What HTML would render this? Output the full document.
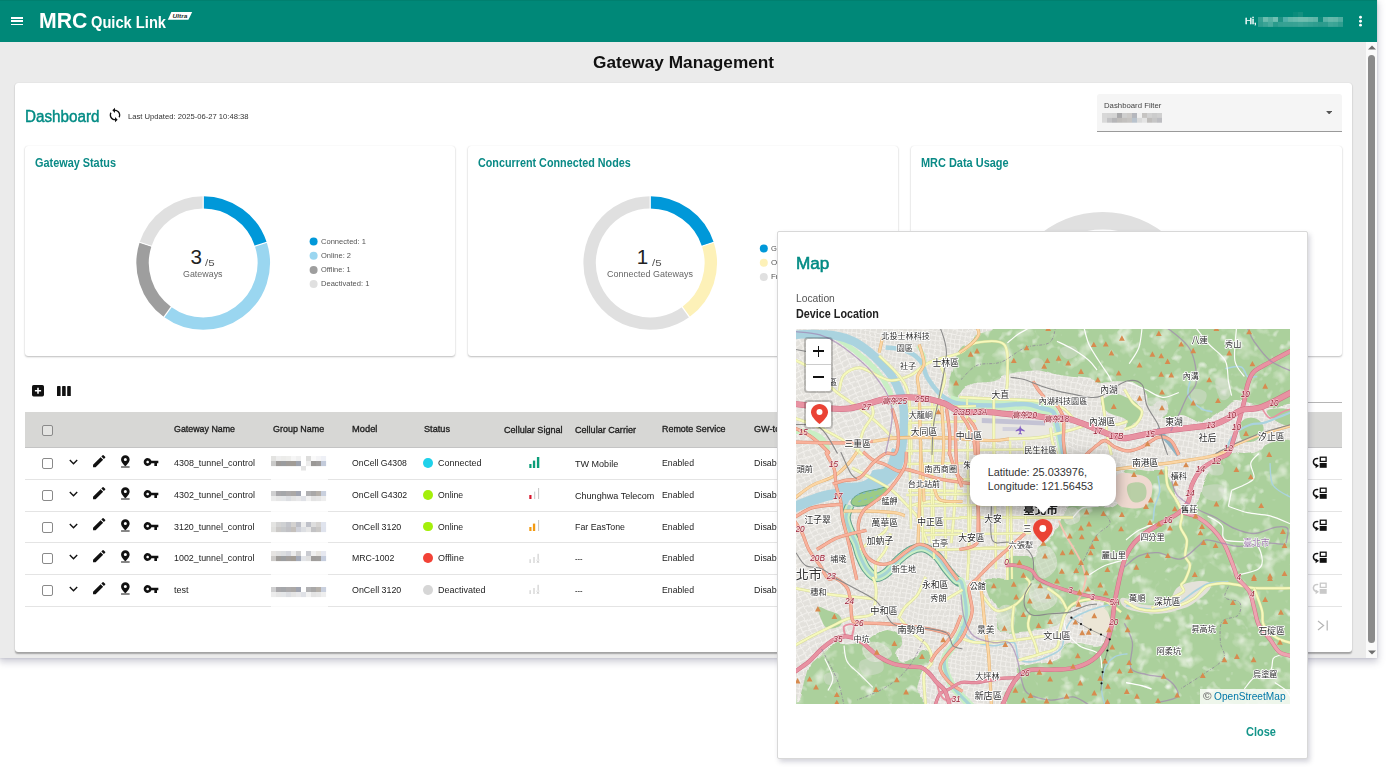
<!DOCTYPE html>
<html lang="en">
<head>
<meta charset="utf-8">
<title>Gateway Management</title>
<style>
*{box-sizing:border-box;margin:0;padding:0}
html,body{width:1400px;height:781px;overflow:hidden;background:#fff}
body{font-family:"Liberation Sans","Noto Sans CJK TC",sans-serif;color:#222;position:relative}
.abs{position:absolute}
.t{position:absolute;white-space:nowrap;line-height:1}
#win{position:absolute;left:0;top:0;width:1377px;height:658px;background:#ebebeb;box-shadow:0 3px 7px 1px rgba(90,90,120,.30),0 0 2px rgba(90,90,120,.25)}
#hdr{position:absolute;left:0;top:0;width:1377px;height:42px;background:#008878;border-top:1px solid #00806f}
#main{position:absolute;left:15px;top:83px;width:1337px;height:569px;background:#fff;border-radius:3px;box-shadow:0 1.5px 1.5px rgba(0,0,0,.30),0 0 1px rgba(0,0,0,.15)}
.card{position:absolute;top:146px;height:210px;background:#fff;border-radius:3px;box-shadow:0 1px 2px rgba(0,0,0,.26),0 0 1px rgba(0,0,0,.10)}
.teal{color:#008b84}
.ct{font-size:12px;font-weight:bold;color:#0a8a86;top:156px}
.lg{font-size:8px;color:#666}
.th{font-size:9px;font-weight:bold;color:#222}
.td{font-size:9px;color:#222}
.rowline{position:absolute;left:25px;width:1317px;height:1px;background:#e4e4e4}
.cb{position:absolute;left:42px;width:11px;height:11px;border:1px solid #8a8a8a;border-radius:2px;background:#fff}
.dot{position:absolute;width:10px;height:10px;border-radius:50%;left:423px}
.blur{position:absolute;filter:blur(.7px)}
</style>
</head>
<body>
<div id="win">
<div id="hdr"></div>
<!-- hamburger -->
<div class="abs" style="left:11px;top:17px;width:12px;height:1.6px;background:#fff"></div>
<div class="abs" style="left:11px;top:20.4px;width:12px;height:1.6px;background:#fff"></div>
<div class="abs" style="left:11px;top:23.8px;width:12px;height:1.6px;background:#fff"></div>
<!-- logo -->
<div class="t" id="lg1" style="left:39.4px;top:10px;font-size:21.8px;color:#fff;font-weight:bold;transform:scaleX(0.9749);transform-origin:0 0;">MRC</div>
<div class="t" id="lg2" style="left:91px;top:15px;font-size:16px;color:#fff;font-weight:bold;transform:scaleX(0.9169);transform-origin:0 0;">Quick Link</div>
<svg class="abs" style="left:166px;top:10px" width="28" height="11" viewBox="0 0 28 11"><path d="M5.4 2 L26.2 2 L22.4 9.8 L1.8 9.8 Z" fill="#fff"/><text x="6.4" y="7.9" font-family="Liberation Sans, sans-serif" font-size="5.8" font-weight="bold" font-style="italic" fill="#1d2f2c" textLength="15" lengthAdjust="spacingAndGlyphs">Ultra</text></svg>
<div class="t" id="hi" style="left:1245px;top:16px;font-size:9.9px;color:#fff;transform:scaleX(0.9756);transform-origin:0 0;-webkit-text-stroke:.35px #fff;">Hi,</div>
<!-- user -->
<svg class="abs" style="left:1258px;top:16.8px" width="85" height="10" viewBox="0 0 85 10"><rect x="0" y="0" width="5.1" height="5" fill="#35a092"/><rect x="0" y="4.9" width="5.1" height="5" fill="#2f9d8f"/><rect x="5" y="0" width="5.1" height="5" fill="#6bbcae"/><rect x="5" y="4.9" width="5.1" height="5" fill="#3ba496"/><rect x="10" y="0" width="5.1" height="5" fill="#55b1a3"/><rect x="10" y="4.9" width="5.1" height="5" fill="#4aab9e"/><rect x="15" y="0" width="5.1" height="5" fill="#6fbfb2"/><rect x="15" y="4.9" width="5.1" height="5" fill="#2a9b8c"/><rect x="20" y="0" width="5.1" height="5" fill="#1f9385"/><rect x="20" y="4.9" width="5.1" height="5" fill="#33a092"/><rect x="25" y="0" width="5.1" height="5" fill="#4fafa8"/><rect x="25" y="4.9" width="5.1" height="5" fill="#36a193"/><rect x="30" y="0" width="5.1" height="5" fill="#62b8aa"/><rect x="30" y="4.9" width="5.1" height="5" fill="#36a193"/><rect x="35" y="0" width="5.1" height="5" fill="#68bbae"/><rect x="35" y="4.9" width="5.1" height="5" fill="#38a294"/><rect x="40" y="0" width="5.1" height="5" fill="#70beb0"/><rect x="40" y="4.9" width="5.1" height="5" fill="#3da597"/><rect x="45" y="0" width="5.1" height="5" fill="#6fbdaf"/><rect x="45" y="4.9" width="5.1" height="5" fill="#38a294"/><rect x="50" y="0" width="5.1" height="5" fill="#66b9ab"/><rect x="50" y="4.9" width="5.1" height="5" fill="#33a092"/><rect x="55" y="0" width="5.1" height="5" fill="#5fb6a8"/><rect x="55" y="4.9" width="5.1" height="5" fill="#2f9d8f"/><rect x="60" y="0" width="5.1" height="5" fill="#0f8c7d"/><rect x="60" y="4.9" width="5.1" height="5" fill="#2b9b8c"/><rect x="65" y="0" width="5.1" height="5" fill="#5ab3a6"/><rect x="65" y="4.9" width="5.1" height="5" fill="#2d9c8e"/><rect x="70" y="0" width="5.1" height="5" fill="#66b9ab"/><rect x="70" y="4.9" width="5.1" height="5" fill="#3fa698"/><rect x="75" y="0" width="5.1" height="5" fill="#62b7a9"/><rect x="75" y="4.9" width="5.1" height="5" fill="#3ba496"/><rect x="80" y="0" width="5.1" height="5" fill="#4fada0"/><rect x="80" y="4.9" width="5.1" height="5" fill="#2f9d8f"/></svg>
<svg class="abs" style="left:1293px;top:12px" width="10" height="5" viewBox="0 0 10 5"><rect width="5" height="5" fill="#0a8c7c"/><rect x="5" width="5" height="5" fill="#159080"/></svg>
<svg class="abs" style="left:1358px;top:15px" width="5" height="13" viewBox="0 0 5 13"><circle cx="2.5" cy="2.3" r="1.45" fill="#fff"/><circle cx="2.5" cy="6.2" r="1.45" fill="#fff"/><circle cx="2.5" cy="10.15" r="1.45" fill="#fff"/></svg>

<div class="t" id="title" style="left:592.6px;top:54px;font-size:17.4px;color:#111;font-weight:bold;transform:scaleX(0.9915);transform-origin:0 0;">Gateway Management</div>
<div id="main"></div>
<div class="t" id="dash" style="left:24.9px;top:109px;font-size:16.9px;color:#008b84;transform:scaleX(0.9023);transform-origin:0 0;-webkit-text-stroke:.45px #008b84;">Dashboard</div>
<svg class="abs" style="left:107px;top:107px" width="16" height="16" viewBox="0 0 24 24"><path fill="#111" d="M12 4V1L8 5l4 4V6c3.31 0 6 2.69 6 6 0 1.01-.25 1.97-.7 2.8l1.46 1.46C19.54 15.03 20 13.57 20 12c0-4.42-3.58-8-8-8zm0 14c-3.31 0-6-2.69-6-6 0-1.01.25-1.97.7-2.8L5.24 7.74C4.46 8.97 4 10.43 4 12c0 4.42 3.58 8 8 8v3l4-4-4-4v3z"/></svg>
<div class="t" id="upd" style="left:127.6px;top:113px;font-size:8px;color:#333;transform:scaleX(0.9547);transform-origin:0 0;">Last Updated: 2025-06-27 10:48:38</div>
<div class="abs" style="left:1097px;top:93.5px;width:245px;height:38px;background:#f5f5f5;border-radius:3px 3px 0 0;border-bottom:1px solid #9a9a9a"></div>
<div class="t" id="flt" style="left:1104px;top:102px;font-size:8px;color:#444;transform:scaleX(0.9706);transform-origin:0 0;">Dashboard Filter</div>
<svg class="abs" style="left:1102px;top:113px" width="60" height="10" viewBox="0 0 60 10"><rect x="0" y="0" width="5.1" height="5" fill="#d8d8d8"/><rect x="0" y="4.9" width="5.1" height="4.8" fill="#d9d9d9"/><rect x="5" y="0" width="5.1" height="5" fill="#d6d6d6"/><rect x="5" y="4.9" width="5.1" height="4.8" fill="#c3c3c5"/><rect x="10" y="0" width="5.1" height="5" fill="#d4d4d4"/><rect x="10" y="4.9" width="5.1" height="4.8" fill="#b6b6b8"/><rect x="15" y="0" width="5.1" height="5" fill="#a9a9ab"/><rect x="15" y="4.9" width="5.1" height="4.8" fill="#bebcba"/><rect x="20" y="0" width="5.1" height="5" fill="#cfcfcf"/><rect x="20" y="4.9" width="5.1" height="4.8" fill="#c2c0be"/><rect x="25" y="0" width="5.1" height="5" fill="#cdcbc9"/><rect x="25" y="4.9" width="5.1" height="4.8" fill="#c6c4c2"/><rect x="30" y="0" width="5.1" height="5" fill="#b5b7bd"/><rect x="30" y="4.9" width="5.1" height="4.8" fill="#b9c3cd"/><rect x="35" y="0" width="5.1" height="5" fill="#f0f0f0"/><rect x="35" y="4.9" width="5.1" height="4.8" fill="#dadada"/><rect x="40" y="0" width="5.1" height="5" fill="#c6c4c2"/><rect x="40" y="4.9" width="5.1" height="4.8" fill="#e4e4e4"/><rect x="45" y="0" width="5.1" height="5" fill="#d2d2d2"/><rect x="45" y="4.9" width="5.1" height="4.8" fill="#bfbdbb"/><rect x="50" y="0" width="5.1" height="5" fill="#cccccc"/><rect x="50" y="4.9" width="5.1" height="4.8" fill="#c6c6c6"/><rect x="55" y="0" width="5.1" height="5" fill="#d0d0d0"/><rect x="55" y="4.9" width="5.1" height="4.8" fill="#bdbdc1"/></svg>
<svg class="abs" style="left:1325.8px;top:110.8px" width="6.4" height="3.5" viewBox="0 0 7 4"><path d="M0 0h7L3.5 4z" fill="#555"/></svg>
<div class="card" style="left:25px;width:430px"></div>
<div class="t" id="ct0" style="left:34.8px;top:157px;font-size:12.3px;color:#0a8a86;font-weight:bold;transform:scaleX(0.8843);transform-origin:0 0;">Gateway Status</div>
<div class="card" style="left:468px;width:430px"></div>
<div class="t" id="ct1" style="left:477.8px;top:157px;font-size:12.3px;color:#0a8a86;font-weight:bold;transform:scaleX(0.8768);transform-origin:0 0;">Concurrent Connected Nodes</div>
<div class="card" style="left:911px;width:431px"></div>
<div class="t" id="ct2" style="left:920.8px;top:157px;font-size:12.3px;color:#0a8a86;font-weight:bold;transform:scaleX(0.89);transform-origin:0 0;">MRC Data Usage</div>
<svg class="abs" style="left:0;top:0" width="1377" height="400" viewBox="0 0 1377 400"><path d="M203.2 202.4A60.6 60.6 0 0 1 260.83 244.27" fill="none" stroke="#0098d9" stroke-width="12.4"/><path d="M260.83 244.27A60.6 60.6 0 0 1 167.58 312.03" fill="none" stroke="#9ad6f0" stroke-width="12.4"/><path d="M167.58 312.03A60.6 60.6 0 0 1 145.57 244.27" fill="none" stroke="#9e9e9e" stroke-width="12.4"/><path d="M145.57 244.27A60.6 60.6 0 0 1 203.2 202.4" fill="none" stroke="#e0e0e0" stroke-width="12.4"/><line x1="203.2" y1="209.6" x2="203.2" y2="195.2" stroke="#fff" stroke-width="1.2"/><line x1="253.99" y1="246.5" x2="267.68" y2="242.05" stroke="#fff" stroke-width="1.2"/><line x1="171.81" y1="306.2" x2="163.35" y2="317.85" stroke="#fff" stroke-width="1.2"/><line x1="152.41" y1="246.5" x2="138.72" y2="242.05" stroke="#fff" stroke-width="1.2"/><path d="M650.2 202.4A60.6 60.6 0 0 1 707.83 244.27" fill="none" stroke="#0098d9" stroke-width="12.4"/><path d="M707.83 244.27A60.6 60.6 0 0 1 685.82 312.03" fill="none" stroke="#fdf1b8" stroke-width="12.4"/><path d="M685.82 312.03A60.6 60.6 0 1 1 650.2 202.4" fill="none" stroke="#e0e0e0" stroke-width="12.4"/><line x1="650.2" y1="209.6" x2="650.2" y2="195.2" stroke="#fff" stroke-width="1.2"/><line x1="700.99" y1="246.5" x2="714.68" y2="242.05" stroke="#fff" stroke-width="1.2"/><line x1="681.59" y1="306.2" x2="690.05" y2="317.85" stroke="#fff" stroke-width="1.2"/><circle cx="1102.7" cy="312" r="91.3" fill="none" stroke="#e0e0e0" stroke-width="17.4"/><circle cx="313.6" cy="241.6" r="4" fill="#0098d9"/><circle cx="313.6" cy="255.75" r="4" fill="#9ad6f0"/><circle cx="313.6" cy="269.9" r="4" fill="#9e9e9e"/><circle cx="313.6" cy="284.05" r="4" fill="#e0e0e0"/><circle cx="763.8" cy="248.6" r="4" fill="#0098d9"/><circle cx="763.8" cy="262.75" r="4" fill="#fdf1b8"/><circle cx="763.8" cy="276.9" r="4" fill="#e0e0e0"/></svg>
<div class="t" id="lgA0" style="left:321.2px;top:238px;font-size:7.9px;color:#555;transform:scaleX(0.9575);transform-origin:0 0;">Connected: 1</div>
<div class="t" id="lgA1" style="left:321.2px;top:252px;font-size:7.9px;color:#555;transform:scaleX(0.9488);transform-origin:0 0;">Online: 2</div>
<div class="t" id="lgA2" style="left:321.2px;top:266px;font-size:7.9px;color:#555;transform:scaleX(0.9405);transform-origin:0 0;">Offline: 1</div>
<div class="t" id="lgA3" style="left:321.2px;top:280px;font-size:7.9px;color:#555;transform:scaleX(0.9584);transform-origin:0 0;">Deactivated: 1</div>
<div class="t" style="left:771.3px;top:245px;font-size:7.9px;color:#555;transform:scaleX(0.9565);transform-origin:0 0;">Gateways: 1</div>
<div class="t" style="left:771.3px;top:259px;font-size:7.9px;color:#555;transform:scaleX(1.0157);transform-origin:0 0;">Others: 1</div>
<div class="t" style="left:771.3px;top:273px;font-size:7.9px;color:#555;transform:scaleX(0.9989);transform-origin:0 0;">Free: 3</div>
<div class="t" id="n3" style="left:190.4px;top:247px;font-size:20.6px;color:#222;">3</div>
<div class="t" style="left:205.4px;top:258px;font-size:9.6px;color:#555;transform:scaleX(1.1991);transform-origin:0 0;">/5</div>
<div class="t" id="gw" style="left:183px;top:270px;font-size:9.2px;color:#666;transform:scaleX(0.9681);transform-origin:0 0;">Gateways</div>
<div class="t" id="n1" style="left:636.8px;top:247px;font-size:20.6px;color:#222;">1</div>
<div class="t" style="left:652.4px;top:258px;font-size:9.6px;color:#555;transform:scaleX(1.1991);transform-origin:0 0;">/5</div>
<div class="t" id="cgw" style="left:607px;top:270px;font-size:9.2px;color:#666;transform:scaleX(0.9777);transform-origin:0 0;">Connected Gateways</div>
<svg class="abs" style="left:31.5px;top:385.3px" width="12" height="11.4" viewBox="0 0 12 11.4"><rect width="12" height="11.4" rx="1.6" fill="#111"/><path d="M5.2 2.7h1.6v2.2h2.3v1.6H6.8v2.2H5.2V6.5H2.9V4.9h2.3z" fill="#fff"/></svg>
<svg class="abs" style="left:56.5px;top:385.8px" width="14" height="10.6" viewBox="0 0 14 10.6"><rect x="0" width="3.6" height="10.6" rx=".8" fill="#111"/><rect x="5.1" width="3.6" height="10.6" rx=".8" fill="#111"/><rect x="10.2" width="3.6" height="10.6" rx=".8" fill="#111"/></svg>
<div class="abs" style="left:1100px;top:401.8px;width:242px;height:1px;background:#b5b5b5"></div>
<div class="abs" style="left:25px;top:412px;width:1317px;height:35.5px;background:#d7d7d5;border-bottom:1px solid #c4c4c4"></div>
<div class="cb" style="top:424.5px;background:#e4e4e2"></div>
<div class="t" id="th0" style="left:174.4px;top:425px;font-size:9.3px;color:#1d1d1d;transform:scaleX(0.9518);transform-origin:0 0;-webkit-text-stroke:.32px #1d1d1d;">Gateway Name</div>
<div class="t" id="th1" style="left:272.6px;top:425px;font-size:9.3px;color:#1d1d1d;transform:scaleX(0.9617);transform-origin:0 0;-webkit-text-stroke:.32px #1d1d1d;">Group Name</div>
<div class="t" id="th2" style="left:351.8px;top:425px;font-size:9.3px;color:#1d1d1d;transform:scaleX(1.0028);transform-origin:0 0;-webkit-text-stroke:.32px #1d1d1d;">Model</div>
<div class="t" id="th3" style="left:423.6px;top:425px;font-size:9.3px;color:#1d1d1d;transform:scaleX(0.9861);transform-origin:0 0;-webkit-text-stroke:.32px #1d1d1d;">Status</div>
<div class="t" id="th4" style="left:503.9px;top:426px;font-size:9.3px;color:#1d1d1d;transform:scaleX(0.9772);transform-origin:0 0;-webkit-text-stroke:.32px #1d1d1d;">Cellular Signal</div>
<div class="t" id="th5" style="left:575.4px;top:426px;font-size:9.3px;color:#1d1d1d;transform:scaleX(0.9755);transform-origin:0 0;-webkit-text-stroke:.32px #1d1d1d;">Cellular Carrier</div>
<div class="t" id="th6" style="left:661.8px;top:425px;font-size:9.3px;color:#1d1d1d;transform:scaleX(0.9613);transform-origin:0 0;-webkit-text-stroke:.32px #1d1d1d;">Remote Service</div>
<div class="t" id="th7" style="left:754px;top:425px;font-size:9.3px;color:#1d1d1d;transform:scaleX(0.9824);transform-origin:0 0;-webkit-text-stroke:.32px #1d1d1d;">GW-to-GW</div>
<div class="rowline" style="top:479.1px"></div>
<div class="cb" style="top:458.2px"></div>
<svg class="abs" style="left:69px;top:459.3px" width="9" height="6" viewBox="0 0 9 6"><path d="M.8 1.1L4.5 4.7 8.2 1.1" fill="none" stroke="#111" stroke-width="1.4"/></svg>
<svg class="abs" style="left:91.4px;top:453px" width="16.4" height="16.4" viewBox="0 0 24 24"><path fill="#111" d="M3 17.25V21h3.75L17.81 9.94l-3.75-3.75L3 17.25zM20.71 7.04a.996.996 0 0 0 0-1.41l-2.34-2.34a.996.996 0 0 0-1.41 0l-1.83 1.83 3.75 3.75 1.83-1.83z"/></svg>
<svg class="abs" style="left:118.1px;top:454.3px" width="14.7" height="14.7" viewBox="0 0 24 24"><path fill="#111" d="M12 2C8.14 2 5 5.14 5 9c0 5.25 7 11 7 11s7-5.75 7-11c0-3.86-3.14-7-7-7zm0 9.5a2.5 2.5 0 0 1 0-5 2.5 2.5 0 0 1 0 5zM5 20.3h14v1.9H5z"/></svg>
<svg class="abs" style="left:143.4px;top:454.4px" width="16" height="16" viewBox="0 0 24 24"><path fill="#111" d="M12.65 10A5.99 5.99 0 0 0 7 6c-3.31 0-6 2.69-6 6s2.69 6 6 6a5.99 5.99 0 0 0 5.65-4H17v4h4v-4h2v-4H12.65zM7 14c-1.1 0-2-.9-2-2s.9-2 2-2 2 .9 2 2-.9 2-2 2z"/></svg>
<div class="t" style="left:174.3px;top:459px;font-size:9.3px;color:#222;transform:scaleX(0.9598);transform-origin:0 0;">4308_tunnel_control</div>
<svg class="abs" style="left:271.3px;top:449.8px;overflow:visible" width="57" height="24" viewBox="0 0 57 24"><rect y="-1.3" width="57" height="32.15" fill="#fff" opacity=".8"/><rect x="0" y="6" width="5.1" height="5.1" fill="#e3e3e1"/><rect x="0" y="11" width="5.1" height="5.1" fill="#c9c9c8"/><rect x="5" y="6" width="5.1" height="5.1" fill="#eeeeee"/><rect x="5" y="11" width="5.1" height="5.1" fill="#9d9a98"/><rect x="10" y="6" width="5.1" height="5.1" fill="#ececea"/><rect x="10" y="11" width="5.1" height="5.1" fill="#9a9c9e"/><rect x="15" y="6" width="5.1" height="5.1" fill="#eeeeec"/><rect x="15" y="11" width="5.1" height="5.1" fill="#a09c98"/><rect x="20" y="6" width="5.1" height="5.1" fill="#f6f6f6"/><rect x="20" y="11" width="5.1" height="5.1" fill="#a19c96"/><rect x="25" y="6" width="5.1" height="5.1" fill="#f0f0f0"/><rect x="25" y="11" width="5.1" height="5.1" fill="#9ea3ae"/><rect x="30" y="6" width="5.1" height="5.1" fill="#ffffff"/><rect x="30" y="11" width="5.1" height="5.1" fill="#ffffff"/><rect x="35" y="6" width="5.1" height="5.1" fill="#dddddc"/><rect x="35" y="11" width="5.1" height="5.1" fill="#ececec"/><rect x="40" y="6" width="5.1" height="5.1" fill="#fafafa"/><rect x="40" y="11" width="5.1" height="5.1" fill="#9a9896"/><rect x="45" y="6" width="5.1" height="5.1" fill="#f4f4f6"/><rect x="45" y="11" width="5.1" height="5.1" fill="#9f9d9c"/><rect x="50" y="6" width="5.1" height="5.1" fill="#eef0f6"/><rect x="50" y="11" width="5.1" height="5.1" fill="#c3cbdb"/><rect x="30" y="16" width="5" height="4.5" fill="#e4e4e4"/></svg>
<div class="t" style="left:351.6px;top:459px;font-size:9.3px;color:#222;transform:scaleX(0.9299);transform-origin:0 0;">OnCell G4308</div>
<div class="dot" style="left:423.1px;top:458.3px;width:9.8px;height:9.8px;background:#1fd1ea"></div>
<div class="t" style="left:438.4px;top:459px;font-size:9.3px;color:#222;transform:scaleX(0.9648);transform-origin:0 0;">Connected</div>
<svg class="abs" style="left:528.6px;top:456.7px" width="11" height="11" viewBox="0 0 11 11"><rect x="0.3" y="7" width="2.2" height="4" fill="#0a9d78"/><rect x="3.9" y="3.6" width="2.3" height="7.4" fill="#0a9d78"/><rect x="7.9" y="0" width="2.4" height="11" fill="#0a9d78"/></svg>
<div class="t" style="left:575.4px;top:460px;font-size:9.3px;color:#222;transform:scaleX(0.9721);transform-origin:0 0;">TW Mobile</div>
<div class="t" style="left:661.8px;top:459px;font-size:9.3px;color:#222;transform:scaleX(0.9376);transform-origin:0 0;">Enabled</div>
<div class="t" style="left:754px;top:459px;font-size:9.3px;color:#222;transform:scaleX(0.9561);transform-origin:0 0;">Disabled</div>
<svg class="abs" style="left:1311.5px;top:455.8px" width="15" height="13" viewBox="0 0 15 13"><path d="M6.2 2.6A3.6 3.6 0 1 0 5 9.6" fill="none" stroke="#111" stroke-width="1.5"/><path d="M3.6 7.6l3.4 2.2-3.4 2.4z" fill="#111"/><rect x="8.3" y="1.2" width="5.8" height="4.2" fill="none" stroke="#111" stroke-width="1.3"/><rect x="7.7" y="7" width="7" height="4.8" fill="#111"/></svg>
<div class="rowline" style="top:510.8px"></div>
<div class="cb" style="top:489.8px"></div>
<svg class="abs" style="left:69px;top:490.9px" width="9" height="6" viewBox="0 0 9 6"><path d="M.8 1.1L4.5 4.7 8.2 1.1" fill="none" stroke="#111" stroke-width="1.4"/></svg>
<svg class="abs" style="left:91.4px;top:484.6px" width="16.4" height="16.4" viewBox="0 0 24 24"><path fill="#111" d="M3 17.25V21h3.75L17.81 9.94l-3.75-3.75L3 17.25zM20.71 7.04a.996.996 0 0 0 0-1.41l-2.34-2.34a.996.996 0 0 0-1.41 0l-1.83 1.83 3.75 3.75 1.83-1.83z"/></svg>
<svg class="abs" style="left:118.1px;top:485.9px" width="14.7" height="14.7" viewBox="0 0 24 24"><path fill="#111" d="M12 2C8.14 2 5 5.14 5 9c0 5.25 7 11 7 11s7-5.75 7-11c0-3.86-3.14-7-7-7zm0 9.5a2.5 2.5 0 0 1 0-5 2.5 2.5 0 0 1 0 5zM5 20.3h14v1.9H5z"/></svg>
<svg class="abs" style="left:143.4px;top:486px" width="16" height="16" viewBox="0 0 24 24"><path fill="#111" d="M12.65 10A5.99 5.99 0 0 0 7 6c-3.31 0-6 2.69-6 6s2.69 6 6 6a5.99 5.99 0 0 0 5.65-4H17v4h4v-4h2v-4H12.65zM7 14c-1.1 0-2-.9-2-2s.9-2 2-2 2 .9 2 2-.9 2-2 2z"/></svg>
<div class="t" style="left:174.3px;top:491px;font-size:9.3px;color:#222;transform:scaleX(0.9598);transform-origin:0 0;">4302_tunnel_control</div>
<svg class="abs" style="left:271.3px;top:485.2px;overflow:visible" width="57" height="24" viewBox="0 0 57 24"><rect y="-5.1" width="57" height="32.15" fill="#fff" opacity=".8"/><rect x="0" y="6" width="5.1" height="5.1" fill="#cfcfd0"/><rect x="0" y="11" width="5.1" height="5.1" fill="#ececec"/><rect x="5" y="6" width="5.1" height="5.1" fill="#a9a8ab"/><rect x="5" y="11" width="5.1" height="5.1" fill="#e6e6e6"/><rect x="10" y="6" width="5.1" height="5.1" fill="#a5a7aa"/><rect x="10" y="11" width="5.1" height="5.1" fill="#e4e6e8"/><rect x="15" y="6" width="5.1" height="5.1" fill="#acaaab"/><rect x="15" y="11" width="5.1" height="5.1" fill="#dcdee2"/><rect x="20" y="6" width="5.1" height="5.1" fill="#aba8a6"/><rect x="20" y="11" width="5.1" height="5.1" fill="#e4e4e4"/><rect x="25" y="6" width="5.1" height="5.1" fill="#a0a4b0"/><rect x="25" y="11" width="5.1" height="5.1" fill="#e8e8ea"/><rect x="30" y="6" width="5.1" height="5.1" fill="#ffffff"/><rect x="30" y="11" width="5.1" height="5.1" fill="#dfe1e6"/><rect x="35" y="6" width="5.1" height="5.1" fill="#b1b1b3"/><rect x="35" y="11" width="5.1" height="5.1" fill="#f2f2f2"/><rect x="40" y="6" width="5.1" height="5.1" fill="#a9a8a8"/><rect x="40" y="11" width="5.1" height="5.1" fill="#e3e3e3"/><rect x="45" y="6" width="5.1" height="5.1" fill="#b5b0aa"/><rect x="45" y="11" width="5.1" height="5.1" fill="#e6e6e6"/><rect x="50" y="6" width="5.1" height="5.1" fill="#c9d0de"/><rect x="50" y="11" width="5.1" height="5.1" fill="#eeeeee"/></svg>
<div class="t" style="left:351.6px;top:491px;font-size:9.3px;color:#222;transform:scaleX(0.9366);transform-origin:0 0;">OnCell G4302</div>
<div class="dot" style="left:423.1px;top:489.9px;width:9.8px;height:9.8px;background:#a4ef0b"></div>
<div class="t" style="left:438.4px;top:491px;font-size:9.3px;color:#222;transform:scaleX(0.9374);transform-origin:0 0;">Online</div>
<svg class="abs" style="left:528.6px;top:488.3px" width="11" height="11" viewBox="0 0 11 11"><rect x="0.3" y="7" width="2.2" height="4" fill="#d9152c"/><rect x="5.2" y="3.6" width="1" height="7.4" fill="#c6c6c6"/><rect x="9.1" y="0" width="1" height="11" fill="#c6c6c6"/></svg>
<div class="t" style="left:575.4px;top:492px;font-size:9.3px;color:#222;transform:scaleX(0.9741);transform-origin:0 0;">Chunghwa Telecom</div>
<div class="t" style="left:661.8px;top:491px;font-size:9.3px;color:#222;transform:scaleX(0.9376);transform-origin:0 0;">Enabled</div>
<div class="t" style="left:754px;top:491px;font-size:9.3px;color:#222;transform:scaleX(0.9561);transform-origin:0 0;">Disabled</div>
<svg class="abs" style="left:1311.5px;top:487.4px" width="15" height="13" viewBox="0 0 15 13"><path d="M6.2 2.6A3.6 3.6 0 1 0 5 9.6" fill="none" stroke="#111" stroke-width="1.5"/><path d="M3.6 7.6l3.4 2.2-3.4 2.4z" fill="#111"/><rect x="8.3" y="1.2" width="5.8" height="4.2" fill="none" stroke="#111" stroke-width="1.3"/><rect x="7.7" y="7" width="7" height="4.8" fill="#111"/></svg>
<div class="rowline" style="top:542.4px"></div>
<div class="cb" style="top:521.5px"></div>
<svg class="abs" style="left:69px;top:522.6px" width="9" height="6" viewBox="0 0 9 6"><path d="M.8 1.1L4.5 4.7 8.2 1.1" fill="none" stroke="#111" stroke-width="1.4"/></svg>
<svg class="abs" style="left:91.4px;top:516.3px" width="16.4" height="16.4" viewBox="0 0 24 24"><path fill="#111" d="M3 17.25V21h3.75L17.81 9.94l-3.75-3.75L3 17.25zM20.71 7.04a.996.996 0 0 0 0-1.41l-2.34-2.34a.996.996 0 0 0-1.41 0l-1.83 1.83 3.75 3.75 1.83-1.83z"/></svg>
<svg class="abs" style="left:118.1px;top:517.6px" width="14.7" height="14.7" viewBox="0 0 24 24"><path fill="#111" d="M12 2C8.14 2 5 5.14 5 9c0 5.25 7 11 7 11s7-5.75 7-11c0-3.86-3.14-7-7-7zm0 9.5a2.5 2.5 0 0 1 0-5 2.5 2.5 0 0 1 0 5zM5 20.3h14v1.9H5z"/></svg>
<svg class="abs" style="left:143.4px;top:517.7px" width="16" height="16" viewBox="0 0 24 24"><path fill="#111" d="M12.65 10A5.99 5.99 0 0 0 7 6c-3.31 0-6 2.69-6 6s2.69 6 6 6a5.99 5.99 0 0 0 5.65-4H17v4h4v-4h2v-4H12.65zM7 14c-1.1 0-2-.9-2-2s.9-2 2-2 2 .9 2 2-.9 2-2 2z"/></svg>
<div class="t" style="left:174.3px;top:523px;font-size:9.3px;color:#222;transform:scaleX(0.9551);transform-origin:0 0;">3120_tunnel_control</div>
<svg class="abs" style="left:271.3px;top:515.5px;overflow:visible" width="57" height="24" viewBox="0 0 57 24"><rect y="-3.7" width="57" height="32.15" fill="#fff" opacity=".8"/><rect x="0" y="6" width="5.1" height="5.1" fill="#e4e4e2"/><rect x="0" y="11" width="5.1" height="5.1" fill="#e0e0de"/><rect x="5" y="6" width="5.1" height="5.1" fill="#d4d4d4"/><rect x="5" y="11" width="5.1" height="5.1" fill="#cbc9c7"/><rect x="10" y="6" width="5.1" height="5.1" fill="#cfd1d3"/><rect x="10" y="11" width="5.1" height="5.1" fill="#c6c8ca"/><rect x="15" y="6" width="5.1" height="5.1" fill="#c3c5cb"/><rect x="15" y="11" width="5.1" height="5.1" fill="#c1c1c5"/><rect x="20" y="6" width="5.1" height="5.1" fill="#d4d2d0"/><rect x="20" y="11" width="5.1" height="5.1" fill="#c4c0bc"/><rect x="25" y="6" width="5.1" height="5.1" fill="#bdbfc7"/><rect x="25" y="11" width="5.1" height="5.1" fill="#cfd1d9"/><rect x="30" y="6" width="5.1" height="5.1" fill="#ededed"/><rect x="30" y="11" width="5.1" height="5.1" fill="#dcdee2"/><rect x="35" y="6" width="5.1" height="5.1" fill="#bfc1c9"/><rect x="35" y="11" width="5.1" height="5.1" fill="#e6e6e6"/><rect x="40" y="6" width="5.1" height="5.1" fill="#dedede"/><rect x="40" y="11" width="5.1" height="5.1" fill="#c2c2c4"/><rect x="45" y="6" width="5.1" height="5.1" fill="#d6d4d2"/><rect x="45" y="11" width="5.1" height="5.1" fill="#cac8c6"/><rect x="50" y="6" width="5.1" height="5.1" fill="#e0e4ee"/><rect x="50" y="11" width="5.1" height="5.1" fill="#dfe3ed"/></svg>
<div class="t" style="left:351.6px;top:523px;font-size:9.3px;color:#222;transform:scaleX(0.9536);transform-origin:0 0;">OnCell 3120</div>
<div class="dot" style="left:423.1px;top:521.6px;width:9.8px;height:9.8px;background:#a4ef0b"></div>
<div class="t" style="left:438.4px;top:523px;font-size:9.3px;color:#222;transform:scaleX(0.9374);transform-origin:0 0;">Online</div>
<svg class="abs" style="left:528.6px;top:520px" width="11" height="11" viewBox="0 0 11 11"><rect x="0.3" y="7" width="2.2" height="4" fill="#f39a12"/><rect x="3.9" y="3.6" width="2.3" height="7.4" fill="#f39a12"/><rect x="9.1" y="0" width="1" height="11" fill="#c6c6c6"/></svg>
<div class="t" style="left:575.4px;top:523px;font-size:9.3px;color:#222;transform:scaleX(0.9483);transform-origin:0 0;">Far EasTone</div>
<div class="t" style="left:661.8px;top:523px;font-size:9.3px;color:#222;transform:scaleX(0.9376);transform-origin:0 0;">Enabled</div>
<div class="t" style="left:754px;top:523px;font-size:9.3px;color:#222;transform:scaleX(0.9561);transform-origin:0 0;">Disabled</div>
<svg class="abs" style="left:1311.5px;top:519.1px" width="15" height="13" viewBox="0 0 15 13"><path d="M6.2 2.6A3.6 3.6 0 1 0 5 9.6" fill="none" stroke="#111" stroke-width="1.5"/><path d="M3.6 7.6l3.4 2.2-3.4 2.4z" fill="#111"/><rect x="8.3" y="1.2" width="5.8" height="4.2" fill="none" stroke="#111" stroke-width="1.3"/><rect x="7.7" y="7" width="7" height="4.8" fill="#111"/></svg>
<div class="rowline" style="top:574px"></div>
<div class="cb" style="top:553.1px"></div>
<svg class="abs" style="left:69px;top:554.2px" width="9" height="6" viewBox="0 0 9 6"><path d="M.8 1.1L4.5 4.7 8.2 1.1" fill="none" stroke="#111" stroke-width="1.4"/></svg>
<svg class="abs" style="left:91.4px;top:547.9px" width="16.4" height="16.4" viewBox="0 0 24 24"><path fill="#111" d="M3 17.25V21h3.75L17.81 9.94l-3.75-3.75L3 17.25zM20.71 7.04a.996.996 0 0 0 0-1.41l-2.34-2.34a.996.996 0 0 0-1.41 0l-1.83 1.83 3.75 3.75 1.83-1.83z"/></svg>
<svg class="abs" style="left:118.1px;top:549.2px" width="14.7" height="14.7" viewBox="0 0 24 24"><path fill="#111" d="M12 2C8.14 2 5 5.14 5 9c0 5.25 7 11 7 11s7-5.75 7-11c0-3.86-3.14-7-7-7zm0 9.5a2.5 2.5 0 0 1 0-5 2.5 2.5 0 0 1 0 5zM5 20.3h14v1.9H5z"/></svg>
<svg class="abs" style="left:143.4px;top:549.4px" width="16" height="16" viewBox="0 0 24 24"><path fill="#111" d="M12.65 10A5.99 5.99 0 0 0 7 6c-3.31 0-6 2.69-6 6s2.69 6 6 6a5.99 5.99 0 0 0 5.65-4H17v4h4v-4h2v-4H12.65zM7 14c-1.1 0-2-.9-2-2s.9-2 2-2 2 .9 2 2-.9 2-2 2z"/></svg>
<div class="t" style="left:174.3px;top:554px;font-size:9.3px;color:#222;transform:scaleX(0.9551);transform-origin:0 0;">1002_tunnel_control</div>
<svg class="abs" style="left:271.3px;top:545.4px;overflow:visible" width="57" height="24" viewBox="0 0 57 24"><rect y="-1.9" width="57" height="32.15" fill="#fff" opacity=".8"/><rect x="0" y="6" width="5.1" height="5.1" fill="#e6e4e2"/><rect x="0" y="11" width="5.1" height="5.1" fill="#cccac8"/><rect x="5" y="6" width="5.1" height="5.1" fill="#e0e0e0"/><rect x="5" y="11" width="5.1" height="5.1" fill="#a09d9a"/><rect x="10" y="6" width="5.1" height="5.1" fill="#dcdee0"/><rect x="10" y="11" width="5.1" height="5.1" fill="#9c9ea0"/><rect x="15" y="6" width="5.1" height="5.1" fill="#d4d6dc"/><rect x="15" y="11" width="5.1" height="5.1" fill="#a39f9c"/><rect x="20" y="6" width="5.1" height="5.1" fill="#ececec"/><rect x="20" y="11" width="5.1" height="5.1" fill="#a49e96"/><rect x="25" y="6" width="5.1" height="5.1" fill="#d0d0d0"/><rect x="25" y="11" width="5.1" height="5.1" fill="#a5abb9"/><rect x="30" y="6" width="5.1" height="5.1" fill="#ffffff"/><rect x="30" y="11" width="5.1" height="5.1" fill="#e2e4e8"/><rect x="35" y="6" width="5.1" height="5.1" fill="#c9cbd1"/><rect x="35" y="11" width="5.1" height="5.1" fill="#e0e0e0"/><rect x="40" y="6" width="5.1" height="5.1" fill="#f0f0f0"/><rect x="40" y="11" width="5.1" height="5.1" fill="#9f9d9b"/><rect x="45" y="6" width="5.1" height="5.1" fill="#e8e6e2"/><rect x="45" y="11" width="5.1" height="5.1" fill="#a19f9d"/><rect x="50" y="6" width="5.1" height="5.1" fill="#e6e8f0"/><rect x="50" y="11" width="5.1" height="5.1" fill="#c5cddd"/></svg>
<div class="t" style="left:351.6px;top:554px;font-size:9.3px;color:#222;transform:scaleX(0.9407);transform-origin:0 0;">MRC-1002</div>
<div class="dot" style="left:423.1px;top:553.2px;width:9.8px;height:9.8px;background:#f24236"></div>
<div class="t" style="left:438.4px;top:554px;font-size:9.3px;color:#222;transform:scaleX(0.9697);transform-origin:0 0;">Offline</div>
<svg class="abs" style="left:528.6px;top:551.6px" width="12" height="11" viewBox="0 0 12 11"><rect x=".6" y="7.2" width="1" height="3.8" fill="#c6c6c6"/><rect x="4.5" y="5" width="1" height="6" fill="#c6c6c6"/><rect x="8.6" y="1.8" width="1" height="6" fill="#c6c6c6"/><path d="M7.5 8.2l2.9 2.8M10.4 8.2l-2.9 2.8" stroke="#c6c6c6" stroke-width=".9" fill="none"/></svg>
<div class="t" style="left:575.4px;top:555px;font-size:9.3px;color:#222;transform:scaleX(0.8072);transform-origin:0 0;">---</div>
<div class="t" style="left:661.8px;top:554px;font-size:9.3px;color:#222;transform:scaleX(0.9376);transform-origin:0 0;">Enabled</div>
<div class="t" style="left:754px;top:554px;font-size:9.3px;color:#222;transform:scaleX(0.9561);transform-origin:0 0;">Disabled</div>
<svg class="abs" style="left:1311.5px;top:550.8px" width="15" height="13" viewBox="0 0 15 13"><path d="M6.2 2.6A3.6 3.6 0 1 0 5 9.6" fill="none" stroke="#111" stroke-width="1.5"/><path d="M3.6 7.6l3.4 2.2-3.4 2.4z" fill="#111"/><rect x="8.3" y="1.2" width="5.8" height="4.2" fill="none" stroke="#111" stroke-width="1.3"/><rect x="7.7" y="7" width="7" height="4.8" fill="#111"/></svg>
<div class="rowline" style="top:605.7px"></div>
<div class="cb" style="top:584.8px"></div>
<svg class="abs" style="left:69px;top:585.9px" width="9" height="6" viewBox="0 0 9 6"><path d="M.8 1.1L4.5 4.7 8.2 1.1" fill="none" stroke="#111" stroke-width="1.4"/></svg>
<svg class="abs" style="left:91.4px;top:579.6px" width="16.4" height="16.4" viewBox="0 0 24 24"><path fill="#111" d="M3 17.25V21h3.75L17.81 9.94l-3.75-3.75L3 17.25zM20.71 7.04a.996.996 0 0 0 0-1.41l-2.34-2.34a.996.996 0 0 0-1.41 0l-1.83 1.83 3.75 3.75 1.83-1.83z"/></svg>
<svg class="abs" style="left:118.1px;top:580.9px" width="14.7" height="14.7" viewBox="0 0 24 24"><path fill="#111" d="M12 2C8.14 2 5 5.14 5 9c0 5.25 7 11 7 11s7-5.75 7-11c0-3.86-3.14-7-7-7zm0 9.5a2.5 2.5 0 0 1 0-5 2.5 2.5 0 0 1 0 5zM5 20.3h14v1.9H5z"/></svg>
<svg class="abs" style="left:143.4px;top:581px" width="16" height="16" viewBox="0 0 24 24"><path fill="#111" d="M12.65 10A5.99 5.99 0 0 0 7 6c-3.31 0-6 2.69-6 6s2.69 6 6 6a5.99 5.99 0 0 0 5.65-4H17v4h4v-4h2v-4H12.65zM7 14c-1.1 0-2-.9-2-2s.9-2 2-2 2 .9 2 2-.9 2-2 2z"/></svg>
<div class="t" style="left:174.3px;top:586px;font-size:9.3px;color:#222;transform:scaleX(0.974);transform-origin:0 0;">test</div>
<svg class="abs" style="left:271.3px;top:580.5px;overflow:visible" width="57" height="24" viewBox="0 0 57 24"><rect y="-5.4" width="57" height="32.15" fill="#fff" opacity=".8"/><rect x="0" y="6" width="5.1" height="5.1" fill="#cfcfd0"/><rect x="0" y="11" width="5.1" height="5.1" fill="#ececec"/><rect x="5" y="6" width="5.1" height="5.1" fill="#a9a8ab"/><rect x="5" y="11" width="5.1" height="5.1" fill="#e6e6e6"/><rect x="10" y="6" width="5.1" height="5.1" fill="#a5a7aa"/><rect x="10" y="11" width="5.1" height="5.1" fill="#e4e6e8"/><rect x="15" y="6" width="5.1" height="5.1" fill="#acaaab"/><rect x="15" y="11" width="5.1" height="5.1" fill="#dcdee2"/><rect x="20" y="6" width="5.1" height="5.1" fill="#aba8a6"/><rect x="20" y="11" width="5.1" height="5.1" fill="#e4e4e4"/><rect x="25" y="6" width="5.1" height="5.1" fill="#a0a4b0"/><rect x="25" y="11" width="5.1" height="5.1" fill="#e8e8ea"/><rect x="30" y="6" width="5.1" height="5.1" fill="#ffffff"/><rect x="30" y="11" width="5.1" height="5.1" fill="#dfe1e6"/><rect x="35" y="6" width="5.1" height="5.1" fill="#b1b1b3"/><rect x="35" y="11" width="5.1" height="5.1" fill="#f2f2f2"/><rect x="40" y="6" width="5.1" height="5.1" fill="#a9a8a8"/><rect x="40" y="11" width="5.1" height="5.1" fill="#e3e3e3"/><rect x="45" y="6" width="5.1" height="5.1" fill="#b5b0aa"/><rect x="45" y="11" width="5.1" height="5.1" fill="#e6e6e6"/><rect x="50" y="6" width="5.1" height="5.1" fill="#c9d0de"/><rect x="50" y="11" width="5.1" height="5.1" fill="#eeeeee"/></svg>
<div class="t" style="left:351.6px;top:586px;font-size:9.3px;color:#222;transform:scaleX(0.9536);transform-origin:0 0;">OnCell 3120</div>
<div class="dot" style="left:423.1px;top:584.9px;width:9.8px;height:9.8px;background:#d6d6d6"></div>
<div class="t" style="left:438.4px;top:586px;font-size:9.3px;color:#222;transform:scaleX(0.9692);transform-origin:0 0;">Deactivated</div>
<svg class="abs" style="left:528.6px;top:583.3px" width="12" height="11" viewBox="0 0 12 11"><rect x=".6" y="7.2" width="1" height="3.8" fill="#c6c6c6"/><rect x="4.5" y="5" width="1" height="6" fill="#c6c6c6"/><rect x="8.6" y="1.8" width="1" height="6" fill="#c6c6c6"/><path d="M7.5 8.2l2.9 2.8M10.4 8.2l-2.9 2.8" stroke="#c6c6c6" stroke-width=".9" fill="none"/></svg>
<div class="t" style="left:575.4px;top:587px;font-size:9.3px;color:#222;transform:scaleX(0.8072);transform-origin:0 0;">---</div>
<div class="t" style="left:661.8px;top:586px;font-size:9.3px;color:#222;transform:scaleX(0.9376);transform-origin:0 0;">Enabled</div>
<div class="t" style="left:754px;top:586px;font-size:9.3px;color:#222;transform:scaleX(0.9561);transform-origin:0 0;">Disabled</div>
<svg class="abs" style="left:1311.5px;top:582.4px" width="15" height="13" viewBox="0 0 15 13"><path d="M6.2 2.6A3.6 3.6 0 1 0 5 9.6" fill="none" stroke="#c9c9c9" stroke-width="1.5"/><path d="M3.6 7.6l3.4 2.2-3.4 2.4z" fill="#c9c9c9"/><rect x="8.3" y="1.2" width="5.8" height="4.2" fill="none" stroke="#c9c9c9" stroke-width="1.3"/><rect x="7.7" y="7" width="7" height="4.8" fill="#c9c9c9"/></svg>
<svg class="abs" style="left:1317px;top:619.5px" width="12" height="11" viewBox="0 0 12 11"><path d="M1 1l5.6 4.5L1 10" fill="none" stroke="#b5b5b5" stroke-width="1.2"/><path d="M10.2.6v9.8" stroke="#b5b5b5" stroke-width="1.2"/></svg>
<div class="abs" style="left:1366px;top:42px;width:11px;height:616px;background:#fafafa"></div>
<div class="abs" style="left:1368px;top:54.5px;width:7.4px;height:588px;border-radius:4px;background:#8b8b8b"></div>
<svg class="abs" style="left:1367.8px;top:45.3px" width="8" height="5" viewBox="0 0 8 5"><path d="M0 4.5L4 .5 8 4.5z" fill="#6e6e6e"/></svg>
<svg class="abs" style="left:1367.8px;top:649.5px" width="8" height="5" viewBox="0 0 8 5"><path d="M0 .5L4 4.5 8 .5z" fill="#6e6e6e"/></svg>
</div>
<div id="dlg" class="abs" style="left:777px;top:231.3px;width:531px;height:528px;background:#fff;border:1px solid #d8d8d8;border-radius:2px;box-shadow:2px 3px 5px rgba(80,80,110,.24)"></div>
<div class="t" id="mapt" style="left:796px;top:255px;font-size:17px;color:#008b84;transform:scaleX(1.01);transform-origin:0 0;-webkit-text-stroke:.55px #008b84;">Map</div>
<div class="t" id="loc" style="left:796px;top:294px;font-size:10px;color:#555;transform:scaleX(1.0262);transform-origin:0 0;">Location</div>
<div class="t" id="dloc" style="left:796px;top:308px;font-size:12.2px;color:#222;font-weight:bold;transform:scaleX(0.8871);transform-origin:0 0;">Device Location</div>
<div id="map" class="abs" style="left:796px;top:329.2px;width:494px;height:375px;overflow:hidden;background:#aacf9c">
<svg class="abs" style="left:0;top:0" width="494" height="375" viewBox="0 0 494 375" font-family="Liberation Sans, Noto Sans CJK TC, sans-serif">
<defs><pattern id="st" width="5" height="5" patternUnits="userSpaceOnUse" patternTransform="rotate(9)"><rect width="5" height="5" fill="#e2e0db"/><path d="M0 .5H5M.5 0V5" stroke="#f1efeb" stroke-width="1.1"/></pattern><pattern id="st2" width="7" height="5.5" patternUnits="userSpaceOnUse" patternTransform="rotate(-24)"><rect width="7" height="5.5" fill="#e3e1dc"/><path d="M0 .5H7M.5 0V5.5" stroke="#f2f0ec" stroke-width="1.1"/></pattern><filter id="mot" x="0" y="0" width="100%" height="100%"><feTurbulence type="fractalNoise" baseFrequency="0.05" numOctaves="3" seed="7"/><feColorMatrix type="matrix" values="0 0 0 0 .9  0 0 0 0 .93  0 0 0 0 .85  2.6 0 0 0 -1.48"/></filter><filter id="mot2" x="0" y="0" width="100%" height="100%"><feTurbulence type="fractalNoise" baseFrequency="0.09" numOctaves="2" seed="21"/><feColorMatrix type="matrix" values="0 0 0 0 .96  0 0 0 0 .96  0 0 0 0 .94  0 3.4 0 0 -2.15"/></filter><filter id="wob" x="-5%" y="-5%" width="110%" height="110%"><feTurbulence type="fractalNoise" baseFrequency="0.035" numOctaves="2" seed="11" result="n"/><feDisplacementMap in="SourceGraphic" in2="n" scale="9" xChannelSelector="R" yChannelSelector="G"/></filter><filter id="soft"><feGaussianBlur stdDeviation=".55"/></filter><filter id="soft2"><feGaussianBlur stdDeviation=".35"/></filter></defs>
<g filter="url(#soft)">
<rect width="494" height="375" fill="#abd09c"/>
<rect width="494" height="375" filter="url(#mot)"/>
<rect width="494" height="375" filter="url(#mot2)"/>
<g filter="url(#wob)">
<path d="M0 0C36.7 -69.2 145.8 -2 181.8 -0.5C217.8 1 182 4.3 180.2 7.5C178.4 10.7 175.8 13.1 173 15.5C170.2 17.9 169.2 16.3 166.3 19.5C163.4 22.7 160.8 26.2 158.5 31.5C156.1 36.8 155.7 41.8 154.4 45.9C153.2 50.1 152.4 48.8 152 52.3C151.7 55.8 151.2 60.5 152.8 63.5C154.4 66.6 157.6 67.5 160.1 67.5C162.5 67.5 162.1 66.1 165 63.5C167.9 61 168.2 57 174.6 54.7C181 52.5 189.6 54.1 197 52.3C204.4 50.6 205 47.9 211.4 45.9C217.8 43.9 222.3 43.3 229 42.4C235.7 41.5 238.6 40.7 245 41.4C251.4 42.1 254.6 44.4 261 45.9C267.4 47.5 270.6 48.1 277 49.1C283.4 50.1 287.9 50 293 51C298.2 52.1 299.4 54 302.6 54.2C305.8 54.5 303.6 52.6 309 52.3C314.5 52 323.9 52.2 330 52.6C336.1 53.1 335.8 52.5 339.6 54.7C343.4 56.9 346.6 59.5 349.2 63.5C351.8 67.5 348.9 73.1 352.4 74.7C355.9 76.3 363 69.9 366.8 71.5C370.7 73.1 371.6 79.2 371.6 82.7C371.6 86.2 364.6 88.5 366.8 89.1C369.1 89.8 377.4 85.9 382.8 85.9C388.3 85.9 389.2 87.5 394 89.1C398.8 90.7 401.7 94.6 406.8 93.9C411.9 93.3 414.5 89.4 419.6 85.9C424.8 82.4 428 79.5 432.4 76.3C436.9 73.1 436.9 70.2 442 69.9C447.2 69.6 451.6 72.8 458 74.7C464.4 76.6 466.4 79.5 474 79.5C481.7 79.5 492 68.3 496.5 74.7C500.9 81.1 500.9 102.9 496.5 111.5C492 120.2 483 115.3 474 117.9C465.1 120.5 460 123.2 451.6 124.5C443.3 125.8 438.8 123.2 432.4 124.5C426 125.8 423.5 127.4 419.6 130.9C415.8 134.4 415.8 137 413.2 142.1C410.7 147.2 409.1 150.4 406.8 156.5C404.6 162.6 404.6 167.7 402 172.5C399.5 177.3 397.5 179.6 394 180.5C390.5 181.5 387.6 180.5 384.4 177.3C381.2 174.1 380.6 170.3 378 164.5C375.5 158.8 373.1 153.3 371.6 148.5C370.2 143.7 374 141.8 370.8 140.5C367.6 139.2 361.9 142.1 355.6 142.1C349.4 142.1 344.7 140.7 339.6 140.5C334.5 140.3 331.9 138.4 330 141.3C328.1 144.2 332.9 147.7 330 154.9C327.1 162.1 325.4 173.2 315.4 177.3C305.5 181.5 289.8 174.1 280.2 175.7C270.6 177.3 271.3 180.5 267.4 185.3C263.6 190.1 264.6 194 261 199.7C257.5 205.5 254 210.4 249.8 214.1C245.7 217.8 242.8 215.2 240.2 218.1C237.7 221 242.5 226.1 237 228.5C231.6 230.9 218.1 225.9 213 230.1C207.9 234.3 215.6 245.6 211.4 249.5C207.3 253.4 195.7 246.6 192.2 249.5C188.7 252.4 191.9 258.1 193.8 263.9C195.7 269.7 200.5 272.9 201.8 278.3C203.1 283.8 200.2 286.3 200.2 291.1C200.2 295.9 199.3 299.8 201.8 302.3C204.4 304.9 206.9 303.9 213 303.9C219.1 303.9 225.2 303 232.2 302.3C239.3 301.7 242.5 301.7 248.2 300.7C254 299.8 256.9 300.4 261 297.5C265.2 294.6 265.8 290.2 269 286.3C272.2 282.5 270.6 280.9 277 278.3C283.4 275.7 294.6 272.9 301 273.5C307.4 274.1 306.2 276.7 309 281.5C311.9 286.3 315.4 291.8 315.4 297.5C315.4 303.3 311.6 306.5 309 310.3C306.5 314.2 309 316.1 302.6 316.7C296.2 317.4 284.1 312.9 277 313.5C270 314.2 270.6 316.7 267.4 319.9C264.2 323.1 268.1 326.3 261 329.5C254 332.7 239.9 334 232.2 335.9C224.5 337.8 225.2 335.9 222.6 339.1C220.1 342.3 222 346.8 219.4 351.9C216.9 357.1 212.7 359.9 209.8 364.7C206.9 369.5 221 373.7 205 375.9C189 378.2 145 383.3 129.6 375.9C114.2 368.6 127.2 347.8 128 339.1C128.8 330.5 132.4 335.6 133.6 332.7C134.9 329.8 135.9 327.3 134.4 324.7C133 322.2 129.6 319.6 126.4 319.9C123.2 320.2 122.6 323.8 118.4 326.3C114.3 328.9 109.5 333 105.6 332.7C101.8 332.4 99.2 328.6 99.2 324.7C99.2 320.9 105 317.7 105.6 313.5C106.3 309.4 105.6 306.8 102.4 303.9C99.2 301 94.1 299.4 89.6 299.1C85.1 298.8 85.1 299.6 80 302.3C74.9 305 70.4 310.2 64 312.7C57.6 315.3 51.9 315.3 48 315.1C44.2 315 48 311.3 44.8 311.9C41.6 312.6 37.8 314.2 32 318.3C26.2 322.5 22.7 327.3 16 332.7C9.3 338.2 1.6 412.1 -1.6 345.5C-4.8 279 -36.7 69.2 0 0Z" fill="url(#st)"/>
<path d="M-1.6 -2.1C5.1 -37 18.2 -5.9 32 -2.1C45.8 1.7 55.7 8.5 67.2 17.1C78.7 25.7 83.2 31.2 89.6 41.1C96 51 96.7 55.8 99.2 66.7C101.8 77.6 103.1 84 102.4 95.5C101.8 107.1 98.6 116.8 96 124.5C93.5 132.2 94.8 129.6 89.6 134.1C84.5 138.6 80 143.1 70.4 146.9C60.8 150.7 52.5 149.5 41.6 153.3C30.7 157.2 24.6 162.3 16 166.1C7.4 170 1.9 206.2 -1.6 172.5C-5.1 138.9 -8.3 32.8 -1.6 -2.1Z" fill="url(#st2)"/>
<path d="M-1.6 182.1C1.9 148.5 6.7 178.3 16 177.3C25.3 176.4 38.4 174.4 44.8 177.3C51.2 180.2 46.1 184.4 48 191.7C49.9 199.1 51.9 205.2 54.4 214.1C57 223.1 58.3 227.5 60.8 236.5C63.4 245.5 62.7 250.1 67.2 259.1C71.7 268.1 76.2 273.8 83.2 281.5C90.3 289.2 101.2 294 102.4 297.5C103.7 301 94.1 298.2 89.6 299.1C85.1 300.1 85.1 299.6 80 302.3C74.9 305 70.4 310.2 64 312.7C57.6 315.3 51.9 315.3 48 315.1C44.2 315 48 311.3 44.8 311.9C41.6 312.6 37.8 314.2 32 318.3C26.2 322.5 22.7 327.3 16 332.7C9.3 338.2 1.9 375.7 -1.6 345.5C-5.1 315.4 -5.1 215.8 -1.6 182.1Z" fill="url(#st2)"/>
</g>
<path d="M382.8 257.5C389.9 253.3 400.4 251.7 406.8 251.9C413.2 252.1 416.4 254 414.8 258.3C413.2 262.6 405.2 269 398.8 273.5C392.4 278 390.2 278.5 382.8 280.7C375.5 283 370.7 284.4 362 284.7C353.4 285 346.6 283.9 339.6 282.3C332.6 280.7 329.4 279.4 326.8 276.7C324.2 274 322.3 268.9 326.8 268.7C331.3 268.5 340.2 275.1 349.2 275.9C358.2 276.7 364.9 276.4 371.6 272.7C378.3 269 375.8 261.7 382.8 257.5Z" fill="#e4e2da"/>
<path d="M293 281.5C297.5 279.3 304.7 276.7 309 279.9C313.4 283.1 315.3 292.4 314.6 297.5C314 302.6 310.2 304.6 305.8 305.5C301.5 306.5 296.9 305.2 293 302.3C289.2 299.4 286.6 295.3 286.6 291.1C286.6 287 288.6 283.8 293 281.5Z" fill="#ece6d6"/>
<path d="M320.4 146.9C324.2 141.5 332.9 144.3 339.6 145.3C346.3 146.3 350.8 147.5 354 151.7C357.2 155.9 356.6 161 355.6 166.1C354.6 171.2 353.7 174.8 349.2 177.3C344.7 179.9 339 179.9 333.2 178.9C327.4 178 323 178.9 320.4 172.5C317.8 166.1 316.6 152.3 320.4 146.9Z" fill="#efd9d0"/>
<path d="M331.6 156.5C333.8 153 344.1 152.3 347.6 154.9C351.1 157.5 351.4 165.8 349.2 169.3C347 172.8 339.9 175.1 336.4 172.5C332.9 170 329.4 160 331.6 156.5Z" fill="#b9cfa6"/>
<path d="M22.4 278.3C23.7 276.4 27.8 279.9 32 281.5C36.2 283.1 40.7 283.4 43.2 286.3C45.8 289.2 47.1 293.4 44.8 295.9C42.6 298.5 35.9 300.1 32 299.1C28.2 298.2 27.5 295.3 25.6 291.1C23.7 287 21.1 280.2 22.4 278.3Z" fill="#abd09c"/>
<path d="M305.8 71.5C308.1 68.8 313.8 65.8 318.6 65.1C323.5 64.5 325.5 66.4 330 68.3C334.5 70.2 338.2 71.2 341.2 74.7C344.2 78.2 346.2 81.8 345.2 85.9C344.2 90.1 339.4 92.8 336.4 95.5C333.4 98.3 331.3 100.5 330 99.5C328.7 98.6 332.9 93.6 330 90.7C327.1 87.8 320 87.5 315.4 85.1C310.9 82.7 309.4 81.4 307.4 78.7C305.5 76 303.6 74.2 305.8 71.5Z" fill="#abd09c"/>
<path d="M445.2 93.1C447.8 89 453.6 88 458 89.1C462.5 90.2 467.3 94.3 467.6 98.7C468 103.2 464.1 109.3 459.6 111.5C455.2 113.8 448.1 113.6 445.2 109.9C442.4 106.3 442.7 97.3 445.2 93.1Z" fill="#abd09c"/>
<path d="M467.6 117.9C470.2 114.7 477.9 112.5 483.6 111.5C489.4 110.6 493.9 109.9 496.5 113.1C499 116.3 501.6 124.7 496.5 127.5C491.3 130.4 476.6 129.5 470.8 127.5C465.1 125.6 465.1 121.1 467.6 117.9Z" fill="#abd09c"/>
<path d="M470.8 82.7C470.8 79.8 478.5 79.5 483.6 79.5C488.8 79.5 493.9 79.5 496.5 82.7C499 85.9 499 93.3 496.5 95.5C493.9 97.8 488.8 96.5 483.6 93.9C478.5 91.4 470.8 85.6 470.8 82.7Z" fill="#abd09c"/>
<path d="M213 230.1C215.6 225.3 221.3 226.9 225.8 226.9C230.3 226.9 233.2 225.3 235.4 230.1C237.7 234.9 241.5 246.8 237 250.9C232.5 255.1 217.8 255.1 213 250.9C208.2 246.8 210.5 234.9 213 230.1Z" fill="#abd09c"/>
<path d="M264.2 20.3C265.5 17.7 273.5 16.1 277 17.1C280.6 18.1 283.1 22.5 281.8 25.1C280.6 27.7 274.2 30.9 270.6 29.9C267.1 28.9 263 22.9 264.2 20.3Z" fill="#d6dccf" opacity=".5"/>
<path d="M233.8 31.5C235.4 29.3 242.1 28.3 245 29.9C247.9 31.5 249.8 37.3 248.2 39.5C246.6 41.8 239.9 42.7 237 41.1C234.1 39.5 232.2 33.8 233.8 31.5Z" fill="#d6dccf" opacity=".5"/>
<path d="M419.6 50.7C421.2 47.2 429.6 49.1 432.4 52.3C435.3 55.5 435.6 63.2 434 66.7C432.4 70.2 427.3 73.1 424.4 69.9C421.5 66.7 418 54.2 419.6 50.7Z" fill="#d6dccf" opacity=".5"/>
<path d="M397.2 60.3C400.1 58.7 408.1 60.6 410 63.5C411.9 66.4 409.7 73.1 406.8 74.7C403.9 76.3 397.5 74.4 395.6 71.5C393.7 68.6 394.3 61.9 397.2 60.3Z" fill="#d6dccf" opacity=".5"/>
<path d="M406.8 158.1C410 155.5 422.5 153.9 426 156.5C429.6 159.1 427.6 168.4 424.4 170.9C421.2 173.5 413.5 171.9 410 169.3C406.5 166.8 403.6 160.7 406.8 158.1Z" fill="#d6dccf" opacity=".5"/>
<path d="M413.2 137.3C415.5 135.4 423.5 134.1 426 135.7C428.6 137.3 428.3 143.4 426 145.3C423.8 147.2 417.4 146.9 414.8 145.3C412.3 143.7 411 139.2 413.2 137.3Z" fill="#d6dccf" opacity=".5"/>
<path d="M28.8 345.5C31 343.3 39.4 342.3 41.6 343.9C43.9 345.5 42.3 351.3 40 353.5C37.8 355.8 32.7 356.7 30.4 355.1C28.2 353.5 26.6 347.8 28.8 345.5Z" fill="#d6dccf" opacity=".5"/>
<path d="M64 332.7C66.9 329.5 78.7 327.6 83.2 329.5C87.7 331.4 89.3 339.1 86.4 342.3C83.5 345.5 73.3 347.5 68.8 345.5C64.3 343.6 61.1 335.9 64 332.7Z" fill="#d6dccf" opacity=".5"/>
<path d="M240.2 259.1C243.4 257.8 252.4 261 254.6 263.9C256.9 266.8 254.6 272.2 251.4 273.5C248.2 274.8 240.9 273.2 238.6 270.3C236.4 267.4 237 260.4 240.2 259.1Z" fill="#d6dccf" opacity=".5"/>
<path d="M350.8 69.9C353.4 67.4 364.6 68.3 368.4 71.5C372.3 74.7 372.6 83.4 370 85.9C367.5 88.5 359.4 87.5 355.6 84.3C351.8 81.1 348.2 72.5 350.8 69.9Z" fill="#d6dccf" opacity=".5"/>
<path d="M235.4 255.9C239.3 252.4 249.5 255.9 254.6 259.1C259.8 262.3 262.3 267.4 261 271.9C259.8 276.4 253.3 280.5 248.2 281.5C243.1 282.5 238 281.8 235.4 276.7C232.9 271.6 231.6 259.4 235.4 255.9Z" fill="url(#st2)" opacity=".55"/>
<path d="M202.6 279.9C205 275.3 213.3 274.1 216.2 278.3C219.1 282.5 219.4 296.1 217 300.7C214.6 305.4 207.1 305.7 204.2 301.5C201.3 297.4 200.2 284.6 202.6 279.9Z" fill="url(#st2)" opacity=".55"/>
<path d="M254.6 286.3C257.2 282.8 264.9 281.8 267.4 284.7C270 287.6 270 297.2 267.4 300.7C264.9 304.2 257.2 305.2 254.6 302.3C252.1 299.4 252.1 289.8 254.6 286.3Z" fill="url(#st2)" opacity=".55"/>
<path d="M241.8 220.5C244.7 216.4 250.8 215.7 254.6 218.9C258.5 222.1 262.3 230.4 261 236.5C259.8 242.6 252.4 248.9 248.2 249.5C244.1 250.1 241.5 245.5 240.2 239.7C238.9 233.9 238.9 224.7 241.8 220.5Z" fill="url(#st2)" opacity=".55"/>
<path d="M67.2 316.7C69.8 313.5 77.5 311.9 83.2 313.5C89 315.1 96 320.9 96 324.7C96 328.6 88.3 331.8 83.2 332.7C78.1 333.7 73.6 332.7 70.4 329.5C67.2 326.3 64.7 319.9 67.2 316.7Z" fill="url(#st2)" opacity=".55"/>
<path d="M267.4 182.1C269.4 178.9 277 177 280.2 178.9C283.4 180.8 285.4 188.5 283.4 191.7C281.5 194.9 273.8 196.8 270.6 194.9C267.4 193 265.5 185.3 267.4 182.1Z" fill="url(#st2)" opacity=".55"/>
<path d="M181 86.7C186.6 85.1 201.3 86.5 213 87.2C224.8 87.9 244.5 88.6 251.4 91C258.4 93.5 255.2 98.5 254.6 101.9C254.1 105.3 255.2 109.8 248.2 111.5C241.3 113.3 223.7 112.6 213 112.3C202.3 112.1 189.8 112.5 184.2 109.9C178.6 107.4 179.9 101 179.4 97.1C178.9 93.3 175.4 88.4 181 86.7Z" fill="#e9e7e2"/>
<path d="M185.8 89.1L249 92L249 96.5L185.8 93.9Z" fill="#c4c3d4"/>
<path d="M206.6 97.9L225.8 98.4L225.8 101.9L206.6 101.9Z" fill="#d2d1dc"/>
<path d="M36.8 5.9C40.8 8.8 53.6 17.6 60.8 23.5C68 29.4 74.7 35 80 41.1C85.4 47.2 89.9 54.5 92.8 60.3C95.8 66.2 96.8 73.7 97.6 76.3" fill="none" stroke="#c9efc4" stroke-width="5" stroke-linejoin="round" />
<path d="M-1.6 101.9C0.8 102.2 8.3 102.2 12.8 103.5C17.3 104.9 22.4 107 25.6 109.9C28.8 112.9 30.9 119.3 32 121.1" fill="none" stroke="#c9efc4" stroke-width="6" stroke-linejoin="round" />
<path d="M-9.6 6.7C-5.3 6.4 7.7 5.1 16 5.1C24.3 5.1 33.1 5.5 40 6.7C46.9 7.9 52.3 9.8 57.6 12.3C63 14.8 67.5 18.3 72 21.9C76.6 25.5 80.8 29.6 84.8 33.9C88.8 38.2 92.8 42.6 96 47.5C99.2 52.5 102.1 58.2 104 63.5C106 68.9 106.9 74.2 107.6 79.5C108.2 84.9 108 90.2 107.9 95.5C107.8 100.9 107.4 106.5 106.9 111.5C106.4 116.6 105.2 123.5 104.8 125.9" fill="none" stroke="#aad3df" stroke-width="8.5" stroke-linejoin="round" />
<path d="M103.2 121.3C102.3 124.2 100.7 133.8 97.6 138.9C94.6 144 89.6 148.2 84.8 151.7C80 155.2 75 158 68.8 160C62.7 162.1 51.5 163.4 48 164" fill="none" stroke="#aad3df" stroke-width="15" stroke-linejoin="round" />
<path d="M52.8 162.9C49.3 163.5 38.1 165 32 166.4C25.9 167.8 21.9 169.2 16 171.2C10.1 173.3 -0 177.6 -3.2 178.9" fill="none" stroke="#aad3df" stroke-width="10.5" stroke-linejoin="round" />
<path d="M40.4 155.5C41.6 153.2 43 154 46.8 153.6C50.6 153.2 55 154.1 59.6 153.6C64.2 153.1 66.8 152.8 69.9 151C73 149.2 73.2 146.6 75 144.6C76.8 142.6 74.3 141.6 78.9 140.8C83.5 140 94.8 139.8 98.1 140.8C101.4 141.8 97 143.3 95.5 145.9C94 148.5 91.7 151.3 90.4 153.6C89.1 155.9 91.4 156.3 89.1 157.5C86.8 158.7 83.8 158 78.9 159.4C74 160.8 69.3 162.7 64.8 164.5C60.3 166.3 59 166.5 56.4 168.4C53.8 170.3 53.3 171.4 51.9 174.1C50.5 176.8 50.8 180.2 49.4 181.8C48 183.4 45.8 184.2 45 182C44.2 179.8 46.3 174.3 45.5 170.9C44.7 167.5 42 168.3 41 165.2C40 162.1 39.2 157.8 40.4 155.5Z" fill="#aad3df"/>
<path d="M55.2 172.5C55.9 170 59.1 166.9 64 164.5C69 162.1 74.5 161.7 80 160.5C85.5 159.3 89.6 157.3 91.5 158.4C93.5 159.6 92.6 163 89.6 166.1C86.7 169.3 82.6 171.9 76.8 174.1C71.1 176.4 65.1 177.6 60.8 177.3C56.5 177 54.6 175.1 55.2 172.5Z" fill="#9ccb86" stroke="#5d9c86" stroke-width="1"/>
<path d="M60.8 166.1L89.6 158.9" stroke="#7fb9d8" stroke-width="1" stroke-dasharray="3 3" fill="none"/>
<path d="M62.4 172.5L86.4 165.3" stroke="#7fb9d8" stroke-width="1" stroke-dasharray="3 3" fill="none"/>
<path d="M153.6 71.5C155.5 72.1 157.8 73.9 165 74.7C172.2 75.6 186.3 76.6 197 76.6C207.7 76.7 221 74.6 229 75C237 75.4 240.4 77.8 245 79C249.7 80.3 255 82.1 257 82.7" fill="none" stroke="#c9efc4" stroke-width="11" stroke-linejoin="round" />
<path d="M257 79.5C257.7 82.2 259.8 90.2 261 95.5C262.3 100.9 263.5 106.5 264.6 111.5C265.6 116.6 267 123.5 267.4 125.9" fill="none" stroke="#c9efc4" stroke-width="8" stroke-linejoin="round" />
<path d="M89.6 18.4C92 18.7 99.5 18.9 104 20C108.6 21.1 113.1 22.7 116.8 25.1C120.6 27.6 124.3 31.2 126.4 34.7C128.6 38.2 128.4 42.4 130 45.9C131.6 49.4 133.7 52.3 136 55.5C138.4 58.7 141.1 62.5 144 65.1C147 67.8 150.2 69.9 153.6 71.5C157.1 73.1 157.8 73.9 165 74.7C172.2 75.6 186.3 76.6 197 76.6C207.7 76.7 221 74.6 229 75C237 75.4 240.4 77.8 245 79C249.7 80.3 254.4 80 257 82.7C259.7 85.5 259.8 90.7 261 95.5C262.3 100.3 263.5 106.5 264.6 111.5C265.6 116.6 267 123.5 267.4 125.9" fill="none" stroke="#aad3df" stroke-width="4.5" stroke-linejoin="round" />
<path d="M121.6 17.1C122.7 18.7 127 23.2 128 26.7C129.1 30.2 128 36 128 37.9" fill="none" stroke="#c9efc4" stroke-width="3.5" stroke-linejoin="round" />
<path d="M360.4 100.3C362.3 102.2 367.9 107.3 371.6 111.5C375.3 115.8 380.9 123.5 382.8 125.9" fill="none" stroke="#8fb4c4" stroke-width="5" stroke-linejoin="round" />
<path d="M429.2 125.9C430 123.5 431.9 115.5 434 111.5C436.2 107.5 438.6 104.6 442 101.9C445.5 99.3 450.6 96.9 454.8 95.5C459.1 94.2 463.4 95 467.6 93.9C471.9 92.9 475.6 91 480.4 89.1C485.2 87.3 493.8 83.8 496.5 82.7" fill="none" stroke="#aad3df" stroke-width="2.2" stroke-linejoin="round" />
<path d="M394 52.3C393.8 54.7 390.6 62.2 392.4 66.7C394.3 71.3 401.2 76.9 405.2 79.5C409.2 82.2 414.6 82.2 416.4 82.7" fill="none" stroke="#aad3df" stroke-width="1.6" stroke-linejoin="round" />
<path d="M429.2 39.5C431.9 39.2 441.5 36.6 445.2 37.9C449 39.2 449 45.9 451.6 47.5C454.3 49.1 459.6 47.5 461.2 47.5" fill="none" stroke="#aad3df" stroke-width="1.6" stroke-linejoin="round" />
<path d="M474 134.1C474.6 137.8 473.5 150.6 477.2 156.5C481 162.4 493.3 167.2 496.5 169.3" fill="none" stroke="#aad3df" stroke-width="1.4" stroke-linejoin="round" />
<path d="M362 146.9C362.3 149.6 364.1 157.8 363.6 162.9C363.1 168 359.9 172.5 358.8 177.3C357.7 182.1 357.5 189.3 357.2 191.7" fill="none" stroke="#aad3df" stroke-width="1.6" stroke-linejoin="round" />
<path d="M53.6 176.5C53 178.5 49.9 184.4 49.9 188.5C49.9 192.7 51.9 197.1 53.6 201.3C55.3 205.6 58.3 209.9 60 214.1C61.8 218.4 62.3 222.7 64 226.9C65.8 231.2 67.8 236.2 70.4 239.7C73.1 243.3 76.7 247.4 80 248.1C83.4 248.7 86.7 246.6 90.4 243.7C94.2 240.9 98.3 234.7 102.4 230.9C106.6 227.2 111 223.3 115.2 221.3C119.5 219.3 123.8 218 128 218.9C132.3 219.9 137.1 223.5 140.8 226.9C144.6 230.4 147.2 235.7 150.4 239.7C153.6 243.7 157.6 248.6 160.1 250.9C162.5 253.3 164.2 253.5 165 254" fill="none" stroke="#62a08c" stroke-width="9.5" stroke-linejoin="round" />
<path d="M53.6 176.5C53 178.5 49.9 184.4 49.9 188.5C49.9 192.7 51.9 197.1 53.6 201.3C55.3 205.6 58.3 209.9 60 214.1C61.8 218.4 62.3 222.7 64 226.9C65.8 231.2 67.8 236.2 70.4 239.7C73.1 243.3 76.7 247.4 80 248.1C83.4 248.7 86.7 246.6 90.4 243.7C94.2 240.9 98.3 234.7 102.4 230.9C106.6 227.2 111 223.3 115.2 221.3C119.5 219.3 123.8 218 128 218.9C132.3 219.9 137.1 223.5 140.8 226.9C144.6 230.4 147.2 235.7 150.4 239.7C153.6 243.7 157.5 248.4 160.1 250.9C162.6 253.5 164.3 248.9 166 255C167.7 261.1 171.1 278.1 170.2 287.6C169.3 297.1 164.2 304.7 160.5 312C156.8 319.3 149.1 324.1 148.3 331.4C147.5 338.7 151 347.9 155.6 355.7C160.2 363.5 172.6 374.3 176 378" fill="none" stroke="#c9efc4" stroke-width="7.5" stroke-linejoin="round" />
<path d="M53.6 176.5C53 178.5 49.9 184.4 49.9 188.5C49.9 192.7 51.9 197.1 53.6 201.3C55.3 205.6 58.3 209.9 60 214.1C61.8 218.4 62.3 222.7 64 226.9C65.8 231.2 67.8 236.2 70.4 239.7C73.1 243.3 76.7 247.4 80 248.1C83.4 248.7 86.7 246.6 90.4 243.7C94.2 240.9 98.3 234.7 102.4 230.9C106.6 227.2 111 223.3 115.2 221.3C119.5 219.3 123.8 218 128 218.9C132.3 219.9 137.1 223.5 140.8 226.9C144.6 230.4 147.2 235.7 150.4 239.7C153.6 243.7 157.5 248.4 160.1 250.9C162.6 253.5 164.3 248.9 166 255C167.7 261.1 171.1 278.1 170.2 287.6C169.3 297.1 164.2 304.7 160.5 312C156.8 319.3 149.1 324.1 148.3 331.4C147.5 338.7 151 347.9 155.6 355.7C160.2 363.5 172.6 374.3 176 378" fill="none" stroke="#a6d4d4" stroke-width="3.2" stroke-linejoin="round" />
<path d="M165 297.5C166.6 299.6 169.3 307.1 174.6 310.3C179.9 313.5 189.8 316.2 197 316.7C204.2 317.3 213.5 311.4 217.8 313.5C222.1 315.7 219.7 326.3 222.6 329.5C225.6 332.7 230.1 333.3 235.4 332.7C240.8 332.2 249.6 328.7 254.6 326.3C259.7 323.9 263.4 322.3 265.8 318.3C268.2 314.3 267.2 307.1 269 302.3C270.9 297.5 273 293 277 289.5C281 286 287.7 283.6 293 281.5C298.4 279.4 304.8 277.8 309 276.7C313.3 275.6 317 275.4 318.6 275.1" fill="none" stroke="#aad3df" stroke-width="1.6" stroke-linejoin="round" />
<path d="M331.5 324.7C329.3 325.3 322.4 325.5 318.6 327.9C314.9 330.3 311.2 333.5 309 339.1C306.9 344.7 305.8 355.4 305.8 361.5C305.8 367.7 308.5 373.5 309 375.9" fill="none" stroke="#aad3df" stroke-width="1.4" stroke-linejoin="round" />
<path d="M330 276.7C335.3 277.4 353.2 281.2 362 280.7C370.8 280.2 376.7 276.6 382.8 273.5C389 270.4 393.8 265.5 398.8 262.3C403.9 259.1 407.6 255.9 413.2 254.3C418.8 252.7 429.2 253 432.4 252.7" fill="none" stroke="#aad3df" stroke-width="1.8" stroke-linejoin="round" />
<path d="M330 353.5C332.7 354.1 341.7 355.7 346 356.7C350.3 357.8 354 359.4 355.6 359.9" fill="none" stroke="#fff" stroke-width="1.5" stroke-linejoin="round" />
<path d="M288.2 -0.5C289 2.2 290.6 10.2 293 15.5C295.4 20.8 299.4 26.4 302.6 31.5C305.8 36.6 310.1 42.4 312.2 45.9C314.4 49.4 314.9 51.2 315.4 52.3" fill="none" stroke="#fdfdfb" stroke-width="1.2" stroke-linejoin="round" />
<path d="M211.4 13.9C213 12.6 217.6 8.3 221 5.9C224.5 3.5 230.4 0.6 232.2 -0.5" fill="none" stroke="#fdfdfb" stroke-width="1.2" stroke-linejoin="round" />
<path d="M261 12.3C263.7 13.6 271.7 17.1 277 20.3C282.4 23.5 289 28 293 31.5C297 35 299.7 39.5 301 41.1" fill="none" stroke="#fdfdfb" stroke-width="1.2" stroke-linejoin="round" />
<path d="M346 -0.5C345.5 2.7 344.9 12.8 342.8 18.7C340.7 24.6 334.8 32 333.2 34.7" fill="none" stroke="#fdfdfb" stroke-width="1.2" stroke-linejoin="round" />
<path d="M330 52.3C333.2 53.7 343.1 57.7 349.2 60.3C355.3 63 361.2 67.8 366.8 68.3C372.4 68.9 380.1 64.3 382.8 63.5" fill="none" stroke="#fdfdfb" stroke-width="1.2" stroke-linejoin="round" />
<path d="M400.4 -0.5C402.6 2.2 408.4 10.2 413.2 15.5C418 20.8 426 25.4 429.2 31.5C432.4 37.6 431.4 46.4 432.4 52.3C433.5 58.2 435.1 64.3 435.6 66.7" fill="none" stroke="#fdfdfb" stroke-width="1.2" stroke-linejoin="round" />
<path d="M440.4 -0.5C440.2 4.8 437.5 23.5 438.8 31.5C440.2 39.5 446.8 44.8 448.4 47.5" fill="none" stroke="#fdfdfb" stroke-width="1.2" stroke-linejoin="round" />
<path d="M435.6 161.3C438 160.2 446.3 157 450 154.9C453.8 152.8 457.2 152 458 148.5C458.8 145 454 138.1 454.8 134.1C455.6 130.1 461.5 126.1 462.8 124.5" fill="none" stroke="#fdfdfb" stroke-width="1.2" stroke-linejoin="round" />
<path d="M432.4 177.3C435.6 178.4 444.7 182.1 451.6 183.7C458.6 185.3 466.6 184.9 474 186.9C481.5 188.9 492.7 194.3 496.5 195.7" fill="none" stroke="#fdfdfb" stroke-width="1.2" stroke-linejoin="round" />
<path d="M411.6 186.9C414 188.5 423.1 192.5 426 196.5C429 200.5 423.9 208 429.2 210.9C434.6 213.9 451.9 211.2 458 214.1C464.2 217.1 465.2 224.3 466 228.5C466.8 232.8 466.8 236.8 462.8 239.7C458.8 242.7 445.5 245.1 442 246.1" fill="none" stroke="#fdfdfb" stroke-width="1.2" stroke-linejoin="round" />
<path d="M432.4 177.3L435.6 161.3" fill="none" stroke="#fdfdfb" stroke-width="1.2" stroke-linejoin="round" />
<path d="M330 210.9C332.1 209.3 338 204 342.8 201.3C347.6 198.7 356.1 196 358.8 194.9" fill="none" stroke="#fdfdfb" stroke-width="1.2" stroke-linejoin="round" />
<path d="M448.4 359.9C450 358.1 453.8 351.7 458 348.7C462.3 345.8 470.8 345.5 474 342.3C477.2 339.1 475.6 332.2 477.2 329.5C478.8 326.9 482.6 326.9 483.6 326.3" fill="none" stroke="#fdfdfb" stroke-width="1.2" stroke-linejoin="round" />
<path d="M478.8 353.5C480.7 354.9 487.1 358.6 490.1 361.5C493 364.5 495.4 369.5 496.5 371.1" fill="none" stroke="#fdfdfb" stroke-width="1.2" stroke-linejoin="round" />
<path d="M277 188.5C278.6 186.9 282.4 180.8 286.6 178.9C290.9 177.1 300 177.6 302.6 177.3" fill="none" stroke="#fdfdfb" stroke-width="1.2" stroke-linejoin="round" />
<path d="M331.5 230.1C327.7 231.2 315.4 233.9 309 236.5C302.6 239.2 295.7 244.5 293 246.1" fill="none" stroke="#fdfdfb" stroke-width="1.2" stroke-linejoin="round" />
<path d="M267.4 289.5C268 291.6 268 297.8 270.6 302.3C273.3 306.9 278.1 313 283.4 316.7C288.8 320.5 298.9 321 302.6 324.7C306.4 328.5 305.3 336.7 305.8 339.1" fill="none" stroke="#fdfdfb" stroke-width="1.2" stroke-linejoin="round" />
<path d="M48 316.7C48.5 319.4 48.5 327.9 51.2 332.7C53.9 337.5 59.8 341.3 64 345.5C68.3 349.8 74.7 356.2 76.8 358.3" fill="none" stroke="#fdfdfb" stroke-width="1.2" stroke-linejoin="round" />
<path d="M28.8 329.5C30.1 332.7 36.3 343.4 36.8 348.7C37.3 354.1 32.8 359.4 32 361.5" fill="none" stroke="#fdfdfb" stroke-width="1.2" stroke-linejoin="round" />
<path d="M-1.6 30.7C1.3 32.3 9.1 35 16 40.3C22.9 45.6 32 56.2 40 62.7C48 69.3 56.8 74.1 64 79.5C71.2 85 77.9 90.7 83.2 95.5C88.6 100.3 93.9 106.2 96 108.3" fill="none" stroke="#d9dc98" stroke-width="2.9" stroke-linejoin="round"/>
<path d="M-1.6 30.7C1.3 32.3 9.1 35 16 40.3C22.9 45.6 32 56.2 40 62.7C48 69.3 56.8 74.1 64 79.5C71.2 85 77.9 90.7 83.2 95.5C88.6 100.3 93.9 106.2 96 108.3" fill="none" stroke="#f6f9bd" stroke-width="2" stroke-linejoin="round" />
<path d="M43.2 61.9C44 59.3 44.5 49.8 48 45.9C51.5 42 58.2 38.4 64 38.7C69.9 39 77.9 45.4 83.2 47.5C88.6 49.6 90.7 51.8 96 51.5C101.4 51.2 109.9 48.4 115.2 45.9C120.6 43.4 123.8 38.8 128 36.3C132.3 33.8 134.7 32.8 140.8 30.7C147 28.6 158.6 26.3 165 23.5C171.4 20.7 172.2 15.2 179.4 13.9C186.6 12.6 202.9 9.9 208.2 15.5C213.5 21.1 211.1 38.7 211.4 47.5C211.7 56.3 210.1 64.9 209.8 68.3" fill="none" stroke="#d9dc98" stroke-width="2.9" stroke-linejoin="round"/>
<path d="M43.2 61.9C44 59.3 44.5 49.8 48 45.9C51.5 42 58.2 38.4 64 38.7C69.9 39 77.9 45.4 83.2 47.5C88.6 49.6 90.7 51.8 96 51.5C101.4 51.2 109.9 48.4 115.2 45.9C120.6 43.4 123.8 38.8 128 36.3C132.3 33.8 134.7 32.8 140.8 30.7C147 28.6 158.6 26.3 165 23.5C171.4 20.7 172.2 15.2 179.4 13.9C186.6 12.6 202.9 9.9 208.2 15.5C213.5 21.1 211.1 38.7 211.4 47.5C211.7 56.3 210.1 64.9 209.8 68.3" fill="none" stroke="#f6f9bd" stroke-width="2" stroke-linejoin="round" />
<path d="M83.2 26.7C86.4 29.9 97.6 39.8 102.4 45.9C107.2 52.1 110 55.3 112 63.5C114 71.8 113.9 85.1 114.4 95.5C115 105.9 115.1 120.9 115.2 125.9" fill="none" stroke="#d9dc98" stroke-width="2.9" stroke-linejoin="round"/>
<path d="M83.2 26.7C86.4 29.9 97.6 39.8 102.4 45.9C107.2 52.1 110 55.3 112 63.5C114 71.8 113.9 85.1 114.4 95.5C115 105.9 115.1 120.9 115.2 125.9" fill="none" stroke="#f6f9bd" stroke-width="2" stroke-linejoin="round" />
<path d="M140.8 30.7C142.2 33.5 148.3 41.5 148.8 47.5C149.4 53.5 145.9 59.8 144 66.7C142.2 73.7 139 79.3 137.6 89.1C136.3 99 136.3 119.8 136 125.9" fill="none" stroke="#d9dc98" stroke-width="2.9" stroke-linejoin="round"/>
<path d="M140.8 30.7C142.2 33.5 148.3 41.5 148.8 47.5C149.4 53.5 145.9 59.8 144 66.7C142.2 73.7 139 79.3 137.6 89.1C136.3 99 136.3 119.8 136 125.9" fill="none" stroke="#f6f9bd" stroke-width="2" stroke-linejoin="round" />
<path d="M-1.6 89.1C2.7 90.7 14.9 94.5 24 98.7C33.1 103 45.6 110.2 52.8 114.7C60 119.3 64.8 124.1 67.2 125.9" fill="none" stroke="#d9dc98" stroke-width="2.9" stroke-linejoin="round"/>
<path d="M-1.6 89.1C2.7 90.7 14.9 94.5 24 98.7C33.1 103 45.6 110.2 52.8 114.7C60 119.3 64.8 124.1 67.2 125.9" fill="none" stroke="#f6f9bd" stroke-width="2" stroke-linejoin="round" />
<path d="M60.8 125.9C61.9 121.9 64.6 108.6 67.2 101.9C69.9 95.3 75.5 90.5 76.8 85.9C78.2 81.4 75.5 76.6 75.2 74.7" fill="none" stroke="#d9dc98" stroke-width="2.9" stroke-linejoin="round"/>
<path d="M60.8 125.9C61.9 121.9 64.6 108.6 67.2 101.9C69.9 95.3 75.5 90.5 76.8 85.9C78.2 81.4 75.5 76.6 75.2 74.7" fill="none" stroke="#f6f9bd" stroke-width="2" stroke-linejoin="round" />
<path d="M163.4 68.3C169 68.6 184.7 69.4 197 69.9C209.3 70.5 227.4 70.7 237 71.5C246.6 72.3 249.6 73.4 254.6 74.7C259.7 76.1 263.7 77.1 267.4 79.5C271.2 81.9 275.4 87.5 277 89.1" fill="none" stroke="#d9dc98" stroke-width="2.9" stroke-linejoin="round"/>
<path d="M163.4 68.3C169 68.6 184.7 69.4 197 69.9C209.3 70.5 227.4 70.7 237 71.5C246.6 72.3 249.6 73.4 254.6 74.7C259.7 76.1 263.7 77.1 267.4 79.5C271.2 81.9 275.4 87.5 277 89.1" fill="none" stroke="#f6f9bd" stroke-width="2" stroke-linejoin="round" />
<path d="M197.8 69.9L197.8 125.9" fill="none" stroke="#d9dc98" stroke-width="2.9" stroke-linejoin="round"/>
<path d="M197.8 69.9L197.8 125.9" fill="none" stroke="#f6f9bd" stroke-width="2" stroke-linejoin="round" />
<path d="M213 109.9C218.4 109.7 234.4 109.9 245 108.3C255.7 106.7 269.3 102.5 277 100.3C284.8 98.2 289 96.3 291.4 95.5" fill="none" stroke="#d9dc98" stroke-width="2.9" stroke-linejoin="round"/>
<path d="M213 109.9C218.4 109.7 234.4 109.9 245 108.3C255.7 106.7 269.3 102.5 277 100.3C284.8 98.2 289 96.3 291.4 95.5" fill="none" stroke="#f6f9bd" stroke-width="2" stroke-linejoin="round" />
<path d="M305.8 66.7C306.4 70.5 308 81.7 309 89.1C310.1 96.6 311.2 105.4 312.2 111.5C313.3 117.7 314.9 123.5 315.4 125.9" fill="none" stroke="#d9dc98" stroke-width="2.9" stroke-linejoin="round"/>
<path d="M305.8 66.7C306.4 70.5 308 81.7 309 89.1C310.1 96.6 311.2 105.4 312.2 111.5C313.3 117.7 314.9 123.5 315.4 125.9" fill="none" stroke="#f6f9bd" stroke-width="2" stroke-linejoin="round" />
<path d="M254.6 98.7C254.9 100.9 255.2 107 256.2 111.5C257.3 116.1 260.2 123.5 261 125.9" fill="none" stroke="#d9dc98" stroke-width="2.9" stroke-linejoin="round"/>
<path d="M254.6 98.7C254.9 100.9 255.2 107 256.2 111.5C257.3 116.1 260.2 123.5 261 125.9" fill="none" stroke="#f6f9bd" stroke-width="2" stroke-linejoin="round" />
<path d="M331.5 92.3C329.3 92.9 322.4 96.1 318.6 95.5C314.9 95 310.6 90.2 309 89.1" fill="none" stroke="#d9dc98" stroke-width="2.9" stroke-linejoin="round"/>
<path d="M331.5 92.3C329.3 92.9 322.4 96.1 318.6 95.5C314.9 95 310.6 90.2 309 89.1" fill="none" stroke="#f6f9bd" stroke-width="2" stroke-linejoin="round" />
<path d="M328.4 60.3C329.7 62.5 333.5 69.4 336.4 73.1C339.3 76.9 345.5 79 346 82.7C346.5 86.5 342.5 92.6 339.6 95.5C336.7 98.5 330.3 99.5 328.4 100.3" fill="none" stroke="#d9dc98" stroke-width="2.9" stroke-linejoin="round"/>
<path d="M328.4 60.3C329.7 62.5 333.5 69.4 336.4 73.1C339.3 76.9 345.5 79 346 82.7C346.5 86.5 342.5 92.6 339.6 95.5C336.7 98.5 330.3 99.5 328.4 100.3" fill="none" stroke="#f6f9bd" stroke-width="2" stroke-linejoin="round" />
<path d="M56 138.9C60 141 73.4 148 80 151.7C86.7 155.4 90.7 157 96 161.3C101.4 165.6 107.8 172.8 112 177.3C116.3 181.9 119 184 121.6 188.5C124.3 193.1 126.4 200.3 128 204.5C129.6 208.8 130.7 212.5 131.2 214.1" fill="none" stroke="#d9dc98" stroke-width="2.9" stroke-linejoin="round"/>
<path d="M56 138.9C60 141 73.4 148 80 151.7C86.7 155.4 90.7 157 96 161.3C101.4 165.6 107.8 172.8 112 177.3C116.3 181.9 119 184 121.6 188.5C124.3 193.1 126.4 200.3 128 204.5C129.6 208.8 130.7 212.5 131.2 214.1" fill="none" stroke="#f6f9bd" stroke-width="2" stroke-linejoin="round" />
<path d="M112 177.3C116 176.5 127 172.5 136 172.5C145.1 172.5 161.4 176.5 166.5 177.3" fill="none" stroke="#d9dc98" stroke-width="2.9" stroke-linejoin="round"/>
<path d="M112 177.3C116 176.5 127 172.5 136 172.5C145.1 172.5 161.4 176.5 166.5 177.3" fill="none" stroke="#f6f9bd" stroke-width="2" stroke-linejoin="round" />
<path d="M64 220.5C66.2 218.9 72.6 214.1 76.8 210.9C81.1 207.7 87 205.6 89.6 201.3C92.3 197.1 92.3 188 92.8 185.3" fill="none" stroke="#d9dc98" stroke-width="2.9" stroke-linejoin="round"/>
<path d="M64 220.5C66.2 218.9 72.6 214.1 76.8 210.9C81.1 207.7 87 205.6 89.6 201.3C92.3 197.1 92.3 188 92.8 185.3" fill="none" stroke="#f6f9bd" stroke-width="2" stroke-linejoin="round" />
<path d="M112 161.3L166.5 162.1" fill="none" stroke="#d9dc98" stroke-width="2.9" stroke-linejoin="round"/>
<path d="M112 161.3L166.5 162.1" fill="none" stroke="#f6f9bd" stroke-width="2" stroke-linejoin="round" />
<path d="M124.8 201.3L166.5 202.1" fill="none" stroke="#d9dc98" stroke-width="2.9" stroke-linejoin="round"/>
<path d="M124.8 201.3L166.5 202.1" fill="none" stroke="#f6f9bd" stroke-width="2" stroke-linejoin="round" />
<path d="M136 145.3L136 214.1" fill="none" stroke="#d9dc98" stroke-width="2.9" stroke-linejoin="round"/>
<path d="M136 145.3L136 214.1" fill="none" stroke="#f6f9bd" stroke-width="2" stroke-linejoin="round" />
<path d="M160.1 153.3C159.7 159.2 158.5 178.4 157.7 188.5C156.9 198.7 155.6 209.9 155.2 214.1" fill="none" stroke="#d9dc98" stroke-width="2.9" stroke-linejoin="round"/>
<path d="M160.1 153.3C159.7 159.2 158.5 178.4 157.7 188.5C156.9 198.7 155.6 209.9 155.2 214.1" fill="none" stroke="#f6f9bd" stroke-width="2" stroke-linejoin="round" />
<path d="M80 249.5C80 247.1 78.4 239.8 80 234.9C81.6 230.1 87.2 225.6 89.6 220.5C92 215.5 93.6 207.2 94.4 204.5" fill="none" stroke="#d9dc98" stroke-width="2.9" stroke-linejoin="round"/>
<path d="M80 249.5C80 247.1 78.4 239.8 80 234.9C81.6 230.1 87.2 225.6 89.6 220.5C92 215.5 93.6 207.2 94.4 204.5" fill="none" stroke="#f6f9bd" stroke-width="2" stroke-linejoin="round" />
<path d="M163.4 188.5C171.7 188.5 194.1 188.5 213 188.5C232 188.5 266.4 188.5 277 188.5" fill="none" stroke="#d9dc98" stroke-width="2.9" stroke-linejoin="round"/>
<path d="M163.4 188.5C171.7 188.5 194.1 188.5 213 188.5C232 188.5 266.4 188.5 277 188.5" fill="none" stroke="#f6f9bd" stroke-width="2" stroke-linejoin="round" />
<path d="M211.4 172.5L211.4 250.9" fill="none" stroke="#d9dc98" stroke-width="2.9" stroke-linejoin="round"/>
<path d="M211.4 172.5L211.4 250.9" fill="none" stroke="#f6f9bd" stroke-width="2" stroke-linejoin="round" />
<path d="M163.4 220.5C167.7 220.3 180.7 219.2 189 218.9C197.3 218.7 209 218.9 213 218.9" fill="none" stroke="#d9dc98" stroke-width="2.9" stroke-linejoin="round"/>
<path d="M163.4 220.5C167.7 220.3 180.7 219.2 189 218.9C197.3 218.7 209 218.9 213 218.9" fill="none" stroke="#f6f9bd" stroke-width="2" stroke-linejoin="round" />
<path d="M174.6 175.7C174.3 183.2 173.5 208 173 220.5C172.5 233.1 171.7 245.9 171.4 250.9" fill="none" stroke="#d9dc98" stroke-width="2.9" stroke-linejoin="round"/>
<path d="M174.6 175.7C174.3 183.2 173.5 208 173 220.5C172.5 233.1 171.7 245.9 171.4 250.9" fill="none" stroke="#f6f9bd" stroke-width="2" stroke-linejoin="round" />
<path d="M-1.6 259.1C2.7 259.9 15.7 262.6 24 263.9C32.3 265.2 40.8 266.3 48 267.1C55.2 267.9 61.9 268.2 67.2 268.7C72.6 269.2 77.9 270 80 270.3" fill="none" stroke="#d9dc98" stroke-width="2.9" stroke-linejoin="round"/>
<path d="M-1.6 259.1C2.7 259.9 15.7 262.6 24 263.9C32.3 265.2 40.8 266.3 48 267.1C55.2 267.9 61.9 268.2 67.2 268.7C72.6 269.2 77.9 270 80 270.3" fill="none" stroke="#f6f9bd" stroke-width="2" stroke-linejoin="round" />
<path d="M-1.6 316.7C1.3 315.1 9.9 310.3 16 307.1C22.1 303.9 29.1 300.4 35.2 297.5C41.3 294.6 46.4 291.4 52.8 289.5C59.2 287.6 69.4 288.2 73.6 286.3C77.9 284.4 77.4 282.8 78.4 278.3C79.5 273.8 80.3 264.2 80 259.1C79.8 254 77.4 249.8 76.8 247.9" fill="none" stroke="#d9dc98" stroke-width="2.9" stroke-linejoin="round"/>
<path d="M-1.6 316.7C1.3 315.1 9.9 310.3 16 307.1C22.1 303.9 29.1 300.4 35.2 297.5C41.3 294.6 46.4 291.4 52.8 289.5C59.2 287.6 69.4 288.2 73.6 286.3C77.9 284.4 77.4 282.8 78.4 278.3C79.5 273.8 80.3 264.2 80 259.1C79.8 254 77.4 249.8 76.8 247.9" fill="none" stroke="#f6f9bd" stroke-width="2" stroke-linejoin="round" />
<path d="M102.4 289.5C103.5 287.6 105.6 282.3 108.8 278.3C112 274.3 118.2 270.6 121.6 265.5C125.1 260.4 128.3 250.8 129.6 247.9" fill="none" stroke="#d9dc98" stroke-width="2.9" stroke-linejoin="round"/>
<path d="M102.4 289.5C103.5 287.6 105.6 282.3 108.8 278.3C112 274.3 118.2 270.6 121.6 265.5C125.1 260.4 128.3 250.8 129.6 247.9" fill="none" stroke="#f6f9bd" stroke-width="2" stroke-linejoin="round" />
<path d="M104 289.5C106.4 292.2 113.9 301 118.4 305.5C123 310.1 128.3 312.2 131.2 316.7C134.2 321.3 136.6 327.9 136 332.7C135.5 337.5 129.1 338.3 128 345.5C127 352.7 129.4 370.9 129.6 375.9" fill="none" stroke="#d9dc98" stroke-width="2.9" stroke-linejoin="round"/>
<path d="M104 289.5C106.4 292.2 113.9 301 118.4 305.5C123 310.1 128.3 312.2 131.2 316.7C134.2 321.3 136.6 327.9 136 332.7C135.5 337.5 129.1 338.3 128 345.5C127 352.7 129.4 370.9 129.6 375.9" fill="none" stroke="#f6f9bd" stroke-width="2" stroke-linejoin="round" />
<path d="M150.4 270.3L166.5 260.7" fill="none" stroke="#d9dc98" stroke-width="2.9" stroke-linejoin="round"/>
<path d="M150.4 270.3L166.5 260.7" fill="none" stroke="#f6f9bd" stroke-width="2" stroke-linejoin="round" />
<path d="M163.4 308.7C166.3 309.5 172.7 313 181 313.5C189.3 314.1 203.7 312.7 213 311.9C222.4 311.1 231.2 309.5 237 308.7C242.9 307.9 246.4 307.4 248.2 307.1" fill="none" stroke="#d9dc98" stroke-width="2.9" stroke-linejoin="round"/>
<path d="M163.4 308.7C166.3 309.5 172.7 313 181 313.5C189.3 314.1 203.7 312.7 213 311.9C222.4 311.1 231.2 309.5 237 308.7C242.9 307.9 246.4 307.4 248.2 307.1" fill="none" stroke="#f6f9bd" stroke-width="2" stroke-linejoin="round" />
<path d="M185.8 265.5C188.2 268.2 194.9 279.6 200.2 281.5C205.5 283.4 213 279.4 217.8 276.7C222.6 274 226.4 269.2 229 265.5C231.7 261.8 233.8 257.2 233.8 254.3C233.8 251.4 229.8 249 229 247.9" fill="none" stroke="#d9dc98" stroke-width="2.9" stroke-linejoin="round"/>
<path d="M185.8 265.5C188.2 268.2 194.9 279.6 200.2 281.5C205.5 283.4 213 279.4 217.8 276.7C222.6 274 226.4 269.2 229 265.5C231.7 261.8 233.8 257.2 233.8 254.3C233.8 251.4 229.8 249 229 247.9" fill="none" stroke="#f6f9bd" stroke-width="2" stroke-linejoin="round" />
<path d="M217.8 276.7C217.6 280.2 215.9 291.6 216.2 297.5C216.5 303.4 218.9 309.5 219.4 311.9" fill="none" stroke="#d9dc98" stroke-width="2.9" stroke-linejoin="round"/>
<path d="M217.8 276.7C217.6 280.2 215.9 291.6 216.2 297.5C216.5 303.4 218.9 309.5 219.4 311.9" fill="none" stroke="#f6f9bd" stroke-width="2" stroke-linejoin="round" />
<path d="M233.8 286.3C233.6 288.2 231.4 293 232.2 297.5C233 302.1 237 309 238.6 313.5C240.2 318.1 241.3 322.9 241.8 324.7" fill="none" stroke="#d9dc98" stroke-width="2.9" stroke-linejoin="round"/>
<path d="M233.8 286.3C233.6 288.2 231.4 293 232.2 297.5C233 302.1 237 309 238.6 313.5C240.2 318.1 241.3 322.9 241.8 324.7" fill="none" stroke="#f6f9bd" stroke-width="2" stroke-linejoin="round" />
<path d="M222.6 331.1C226.4 330.1 238.6 326.9 245 324.7C251.4 322.6 257.8 322.3 261 318.3C264.2 314.3 262.9 306.3 264.2 300.7C265.6 295.1 266.9 289 269 284.7C271.2 280.4 273 277.5 277 275.1C281 272.7 287.7 270.8 293 270.3C298.4 269.8 303.7 269.8 309 271.9C314.4 274 322.4 281.2 325.1 283.1" fill="none" stroke="#d9dc98" stroke-width="2.9" stroke-linejoin="round"/>
<path d="M222.6 331.1C226.4 330.1 238.6 326.9 245 324.7C251.4 322.6 257.8 322.3 261 318.3C264.2 314.3 262.9 306.3 264.2 300.7C265.6 295.1 266.9 289 269 284.7C271.2 280.4 273 277.5 277 275.1C281 272.7 287.7 270.8 293 270.3C298.4 269.8 303.7 269.8 309 271.9C314.4 274 322.4 281.2 325.1 283.1" fill="none" stroke="#f6f9bd" stroke-width="2" stroke-linejoin="round" />
<path d="M251.4 259.1C253.6 260.7 261 265.2 264.2 268.7C267.4 272.2 269.6 278 270.6 279.9" fill="none" stroke="#d9dc98" stroke-width="2.9" stroke-linejoin="round"/>
<path d="M251.4 259.1C253.6 260.7 261 265.2 264.2 268.7C267.4 272.2 269.6 278 270.6 279.9" fill="none" stroke="#f6f9bd" stroke-width="2" stroke-linejoin="round" />
<path d="M370 137.3C370.3 140.5 369.7 150.6 371.6 156.5C373.5 162.4 378.8 167.7 381.2 172.5C383.6 177.3 385.5 181.1 386 185.3C386.6 189.6 383.6 193.9 384.4 198.1C385.2 202.4 390 206.1 390.8 210.9C391.6 215.7 388.7 222.7 389.2 226.9C389.8 231.2 394 232.5 394 236.5C394 240.5 390.7 247.7 389.2 250.9C387.8 254.2 385.5 254 385.2 255.9C385 257.8 388.8 260.3 387.6 262.3C386.4 264.3 383.4 265.1 378 267.9C372.7 270.7 359.3 277.2 355.6 279.1" fill="none" stroke="#d9dc98" stroke-width="2.9" stroke-linejoin="round"/>
<path d="M370 137.3C370.3 140.5 369.7 150.6 371.6 156.5C373.5 162.4 378.8 167.7 381.2 172.5C383.6 177.3 385.5 181.1 386 185.3C386.6 189.6 383.6 193.9 384.4 198.1C385.2 202.4 390 206.1 390.8 210.9C391.6 215.7 388.7 222.7 389.2 226.9C389.8 231.2 394 232.5 394 236.5C394 240.5 390.7 247.7 389.2 250.9C387.8 254.2 385.5 254 385.2 255.9C385 257.8 388.8 260.3 387.6 262.3C386.4 264.3 383.4 265.1 378 267.9C372.7 270.7 359.3 277.2 355.6 279.1" fill="none" stroke="#f6f9bd" stroke-width="2" stroke-linejoin="round" />
<path d="M328.4 271.9C330.8 273.2 337.2 278.3 342.8 279.9C348.4 281.5 355.3 282 362 281.5C368.7 281 376.7 278.8 382.8 276.7C389 274.6 394.3 271.9 398.8 268.7C403.4 265.5 405.5 259.9 410 257.5C414.6 255.1 420.7 254.6 426 254.3C431.4 254 436.7 255.1 442 255.9C447.4 256.7 449 258.6 458 259.1C467.1 259.6 490.1 259.1 496.5 259.1" fill="none" stroke="#d9dc98" stroke-width="2.9" stroke-linejoin="round"/>
<path d="M328.4 271.9C330.8 273.2 337.2 278.3 342.8 279.9C348.4 281.5 355.3 282 362 281.5C368.7 281 376.7 278.8 382.8 276.7C389 274.6 394.3 271.9 398.8 268.7C403.4 265.5 405.5 259.9 410 257.5C414.6 255.1 420.7 254.6 426 254.3C431.4 254 436.7 255.1 442 255.9C447.4 256.7 449 258.6 458 259.1C467.1 259.6 490.1 259.1 496.5 259.1" fill="none" stroke="#f6f9bd" stroke-width="2" stroke-linejoin="round" />
<path d="M458 259.1C459.4 262.8 464.4 275.4 466 281.5C467.6 287.6 465.2 291.4 467.6 295.9C470 300.4 475.6 305.7 480.4 308.7C485.2 311.8 493.8 313.4 496.5 314.3" fill="none" stroke="#d9dc98" stroke-width="2.9" stroke-linejoin="round"/>
<path d="M458 259.1C459.4 262.8 464.4 275.4 466 281.5C467.6 287.6 465.2 291.4 467.6 295.9C470 300.4 475.6 305.7 480.4 308.7C485.2 311.8 493.8 313.4 496.5 314.3" fill="none" stroke="#f6f9bd" stroke-width="2" stroke-linejoin="round" />
<path d="M113 95C113.2 103.8 113.7 130 114 147.5C114.3 165 114.8 191.2 115 200" fill="none" stroke="#d9dc98" stroke-width="2.4" stroke-linejoin="round"/>
<path d="M113 95C113.2 103.8 113.7 130 114 147.5C114.3 165 114.8 191.2 115 200" fill="none" stroke="#f6f9bd" stroke-width="1.5" stroke-linejoin="round" />
<path d="M136 70C136.2 83.3 136.7 123.3 137 150C137.3 176.7 137.8 216.7 138 230" fill="none" stroke="#d9dc98" stroke-width="2.4" stroke-linejoin="round"/>
<path d="M136 70C136.2 83.3 136.7 123.3 137 150C137.3 176.7 137.8 216.7 138 230" fill="none" stroke="#f6f9bd" stroke-width="1.5" stroke-linejoin="round" />
<path d="M171 70C171.2 83.8 171.7 125 172 152.5C172.3 180 172.8 221.2 173 235" fill="none" stroke="#d9dc98" stroke-width="2.4" stroke-linejoin="round"/>
<path d="M171 70C171.2 83.8 171.7 125 172 152.5C172.3 180 172.8 221.2 173 235" fill="none" stroke="#f6f9bd" stroke-width="1.5" stroke-linejoin="round" />
<path d="M198 112C198.2 122.7 198.7 154.7 199 176C199.3 197.3 199.8 229.3 200 240" fill="none" stroke="#d9dc98" stroke-width="2.4" stroke-linejoin="round"/>
<path d="M198 112C198.2 122.7 198.7 154.7 199 176C199.3 197.3 199.8 229.3 200 240" fill="none" stroke="#f6f9bd" stroke-width="1.5" stroke-linejoin="round" />
<path d="M214 112C214.2 123.5 214.7 158 215 181C215.3 204 215.8 238.5 216 250" fill="none" stroke="#d9dc98" stroke-width="2.4" stroke-linejoin="round"/>
<path d="M214 112C214.2 123.5 214.7 158 215 181C215.3 204 215.8 238.5 216 250" fill="none" stroke="#f6f9bd" stroke-width="1.5" stroke-linejoin="round" />
<path d="M228 112C228.2 119.3 228.7 141.3 229 156C229.3 170.7 229.8 192.7 230 200" fill="none" stroke="#d9dc98" stroke-width="2.4" stroke-linejoin="round"/>
<path d="M228 112C228.2 119.3 228.7 141.3 229 156C229.3 170.7 229.8 192.7 230 200" fill="none" stroke="#f6f9bd" stroke-width="1.5" stroke-linejoin="round" />
<path d="M148 140C148.2 147.5 148.7 170 149 185C149.3 200 149.8 222.5 150 230" fill="none" stroke="#d9dc98" stroke-width="2.4" stroke-linejoin="round"/>
<path d="M148 140C148.2 147.5 148.7 170 149 185C149.3 200 149.8 222.5 150 230" fill="none" stroke="#f6f9bd" stroke-width="1.5" stroke-linejoin="round" />
<path d="M125 112C125.2 120.6 125.7 146.3 126 163.5C126.3 180.7 126.8 206.4 127 215" fill="none" stroke="#d9dc98" stroke-width="2.4" stroke-linejoin="round"/>
<path d="M125 112C125.2 120.6 125.7 146.3 126 163.5C126.3 180.7 126.8 206.4 127 215" fill="none" stroke="#f6f9bd" stroke-width="1.5" stroke-linejoin="round" />
<path d="M112 79C117.7 78.8 134.7 78.3 146 78C157.3 77.7 174.3 77.2 180 77" fill="none" stroke="#d9dc98" stroke-width="2.4" stroke-linejoin="round"/>
<path d="M112 79C117.7 78.8 134.7 78.3 146 78C157.3 77.7 174.3 77.2 180 77" fill="none" stroke="#f6f9bd" stroke-width="1.5" stroke-linejoin="round" />
<path d="M112 94C117.7 93.8 134.7 93.3 146 93C157.3 92.7 174.3 92.2 180 92" fill="none" stroke="#d9dc98" stroke-width="2.4" stroke-linejoin="round"/>
<path d="M112 94C117.7 93.8 134.7 93.3 146 93C157.3 92.7 174.3 92.2 180 92" fill="none" stroke="#f6f9bd" stroke-width="1.5" stroke-linejoin="round" />
<path d="M110 122C122.5 121.8 160 121.3 185 121C210 120.7 247.5 120.2 260 120" fill="none" stroke="#d9dc98" stroke-width="2.4" stroke-linejoin="round"/>
<path d="M110 122C122.5 121.8 160 121.3 185 121C210 120.7 247.5 120.2 260 120" fill="none" stroke="#f6f9bd" stroke-width="1.5" stroke-linejoin="round" />
<path d="M110 135C121.7 134.8 156.7 134.3 180 134C203.3 133.7 238.3 133.2 250 133" fill="none" stroke="#d9dc98" stroke-width="2.4" stroke-linejoin="round"/>
<path d="M110 135C121.7 134.8 156.7 134.3 180 134C203.3 133.7 238.3 133.2 250 133" fill="none" stroke="#f6f9bd" stroke-width="1.5" stroke-linejoin="round" />
<path d="M128 151C138.2 150.8 168.7 150.3 189 150C209.3 149.7 239.8 149.2 250 149" fill="none" stroke="#d9dc98" stroke-width="2.4" stroke-linejoin="round"/>
<path d="M128 151C138.2 150.8 168.7 150.3 189 150C209.3 149.7 239.8 149.2 250 149" fill="none" stroke="#f6f9bd" stroke-width="1.5" stroke-linejoin="round" />
<path d="M110 166C122.5 165.8 160 165.3 185 165C210 164.7 247.5 164.2 260 164" fill="none" stroke="#d9dc98" stroke-width="2.4" stroke-linejoin="round"/>
<path d="M110 166C122.5 165.8 160 165.3 185 165C210 164.7 247.5 164.2 260 164" fill="none" stroke="#f6f9bd" stroke-width="1.5" stroke-linejoin="round" />
<path d="M120 177C131.7 176.8 166.7 176.3 190 176C213.3 175.7 248.3 175.2 260 175" fill="none" stroke="#d9dc98" stroke-width="2.4" stroke-linejoin="round"/>
<path d="M120 177C131.7 176.8 166.7 176.3 190 176C213.3 175.7 248.3 175.2 260 175" fill="none" stroke="#f6f9bd" stroke-width="1.5" stroke-linejoin="round" />
<path d="M120 191C123.8 190.8 135 190.3 142.5 190C150 189.7 161.2 189.2 165 189" fill="none" stroke="#d9dc98" stroke-width="2.4" stroke-linejoin="round"/>
<path d="M120 191C123.8 190.8 135 190.3 142.5 190C150 189.7 161.2 189.2 165 189" fill="none" stroke="#f6f9bd" stroke-width="1.5" stroke-linejoin="round" />
<path d="M130 206C138.8 205.8 165 205.3 182.5 205C200 204.7 226.2 204.2 235 204" fill="none" stroke="#d9dc98" stroke-width="2.4" stroke-linejoin="round"/>
<path d="M130 206C138.8 205.8 165 205.3 182.5 205C200 204.7 226.2 204.2 235 204" fill="none" stroke="#f6f9bd" stroke-width="1.5" stroke-linejoin="round" />
<path d="M140 221C146.2 220.8 165 220.3 177.5 220C190 219.7 208.8 219.2 215 219" fill="none" stroke="#d9dc98" stroke-width="2.4" stroke-linejoin="round"/>
<path d="M140 221C146.2 220.8 165 220.3 177.5 220C190 219.7 208.8 219.2 215 219" fill="none" stroke="#f6f9bd" stroke-width="1.5" stroke-linejoin="round" />
<path d="M123.2 15.5C124 18.7 128.3 29.4 128 34.7C127.8 40 122.4 42.7 121.6 47.5C120.8 52.3 122.8 55.5 123.2 63.5C123.6 71.5 123.8 85.1 124 95.5C124.3 105.9 124.4 118.4 124.8 125.9C125.2 133.4 125.9 132.7 126.4 140.5C127 148.3 127.8 167.2 128 172.5" fill="none" stroke="#e0b070" stroke-width="3.1" stroke-linejoin="round"/>
<path d="M123.2 15.5C124 18.7 128.3 29.4 128 34.7C127.8 40 122.4 42.7 121.6 47.5C120.8 52.3 122.8 55.5 123.2 63.5C123.6 71.5 123.8 85.1 124 95.5C124.3 105.9 124.4 118.4 124.8 125.9C125.2 133.4 125.9 132.7 126.4 140.5C127 148.3 127.8 167.2 128 172.5" fill="none" stroke="#fcd6a4" stroke-width="2.2" stroke-linejoin="round" />
<path d="M76.8 112.3C82.7 111.7 97.3 108.7 112 108.3C126.7 107.9 156.2 109.7 165 109.9C173.8 110.2 159.7 109.7 165 109.9C170.3 110.2 189 111.5 197 111.5C205 111.5 210.3 110.2 213 109.9" fill="none" stroke="#e0b070" stroke-width="3.1" stroke-linejoin="round"/>
<path d="M76.8 112.3C82.7 111.7 97.3 108.7 112 108.3C126.7 107.9 156.2 109.7 165 109.9C173.8 110.2 159.7 109.7 165 109.9C170.3 110.2 189 111.5 197 111.5C205 111.5 210.3 110.2 213 109.9" fill="none" stroke="#fcd6a4" stroke-width="2.2" stroke-linejoin="round" />
<path d="M-1.6 169.3C1.3 167.2 9.3 160.2 16 156.5C22.7 152.8 32.3 150.6 38.4 146.9C44.5 143.2 49.1 138.1 52.8 134.1C56.6 130.1 59.5 124.8 60.8 122.9" fill="none" stroke="#e0b070" stroke-width="3.1" stroke-linejoin="round"/>
<path d="M-1.6 169.3C1.3 167.2 9.3 160.2 16 156.5C22.7 152.8 32.3 150.6 38.4 146.9C44.5 143.2 49.1 138.1 52.8 134.1C56.6 130.1 59.5 124.8 60.8 122.9" fill="none" stroke="#fcd6a4" stroke-width="2.2" stroke-linejoin="round" />
<path d="M48 182.1C52 182.1 63.5 181.9 72 182.1C80.6 182.4 93.1 182.9 99.2 183.7C105.4 184.5 107.2 186.4 108.8 186.9" fill="none" stroke="#e0b070" stroke-width="3.1" stroke-linejoin="round"/>
<path d="M48 182.1C52 182.1 63.5 181.9 72 182.1C80.6 182.4 93.1 182.9 99.2 183.7C105.4 184.5 107.2 186.4 108.8 186.9" fill="none" stroke="#fcd6a4" stroke-width="2.2" stroke-linejoin="round" />
<path d="M182.6 247.9C183.1 250.8 184.7 257.2 185.8 265.5C186.9 273.8 187.9 288.2 189 297.5C190.1 306.9 191.4 313.5 192.2 321.5C193 329.5 193.3 336.5 193.8 345.5C194.3 354.6 195.1 370.9 195.4 375.9" fill="none" stroke="#e0b070" stroke-width="3.1" stroke-linejoin="round"/>
<path d="M182.6 247.9C183.1 250.8 184.7 257.2 185.8 265.5C186.9 273.8 187.9 288.2 189 297.5C190.1 306.9 191.4 313.5 192.2 321.5C193 329.5 193.3 336.5 193.8 345.5C194.3 354.6 195.1 370.9 195.4 375.9" fill="none" stroke="#fcd6a4" stroke-width="2.2" stroke-linejoin="round" />
<path d="M419.6 125.9C423.4 124.1 434.3 118.2 442 114.7C449.8 111.3 457 108.2 466 105.1C475.1 102.1 491.4 97.8 496.5 96.3" fill="none" stroke="#e0b070" stroke-width="3.1" stroke-linejoin="round"/>
<path d="M419.6 125.9C423.4 124.1 434.3 118.2 442 114.7C449.8 111.3 457 108.2 466 105.1C475.1 102.1 491.4 97.8 496.5 96.3" fill="none" stroke="#fcd6a4" stroke-width="2.2" stroke-linejoin="round" />
<path d="M318.6 140.5C320.5 140.2 321.2 140 330 138.9C338.8 137.8 360.9 135.4 371.6 134.1C382.3 132.8 387.1 132 394 130.9C401 129.8 406.8 129 413.2 127.7C419.6 126.4 429.2 123.7 432.4 122.9" fill="none" stroke="#e0b070" stroke-width="3.1" stroke-linejoin="round"/>
<path d="M318.6 140.5C320.5 140.2 321.2 140 330 138.9C338.8 137.8 360.9 135.4 371.6 134.1C382.3 132.8 387.1 132 394 130.9C401 129.8 406.8 129 413.2 127.7C419.6 126.4 429.2 123.7 432.4 122.9" fill="none" stroke="#fcd6a4" stroke-width="2.2" stroke-linejoin="round" />
<path d="M163.4 23.5C165.3 22.2 171.4 18.4 174.6 15.5C177.8 12.6 181.5 8.8 182.6 5.9C183.7 3 181.3 -0.8 181 -2.1" fill="none" stroke="#e0b070" stroke-width="3.1" stroke-linejoin="round"/>
<path d="M163.4 23.5C165.3 22.2 171.4 18.4 174.6 15.5C177.8 12.6 181.5 8.8 182.6 5.9C183.7 3 181.3 -0.8 181 -2.1" fill="none" stroke="#fcd6a4" stroke-width="2.2" stroke-linejoin="round" />
<path d="M166.5 172.5C162.7 172.2 148.8 173.6 144 170.9C139.2 168.2 138.7 158.9 137.6 156.5" fill="none" stroke="#e0b070" stroke-width="3.1" stroke-linejoin="round"/>
<path d="M166.5 172.5C162.7 172.2 148.8 173.6 144 170.9C139.2 168.2 138.7 158.9 137.6 156.5" fill="none" stroke="#fcd6a4" stroke-width="2.2" stroke-linejoin="round" />
<path d="M86.4 9.1L83.2 23.5" fill="none" stroke="#e0b070" stroke-width="3.1" stroke-linejoin="round"/>
<path d="M86.4 9.1L83.2 23.5" fill="none" stroke="#fcd6a4" stroke-width="2.2" stroke-linejoin="round" />
<path d="M94 109C101.7 108.9 124.7 108.5 140 108.5C155.3 108.5 178.3 108.9 186 109" fill="none" stroke="#e0b070" stroke-width="3.1" stroke-linejoin="round"/>
<path d="M94 109C101.7 108.9 124.7 108.5 140 108.5C155.3 108.5 178.3 108.9 186 109" fill="none" stroke="#fcd6a4" stroke-width="2.2" stroke-linejoin="round" />
<path d="M145.2 71C145.6 77.8 147.5 100.7 147.7 112C147.9 123.3 146.5 134.5 146.3 139" fill="none" stroke="#e0b070" stroke-width="3.1" stroke-linejoin="round"/>
<path d="M145.2 71C145.6 77.8 147.5 100.7 147.7 112C147.9 123.3 146.5 134.5 146.3 139" fill="none" stroke="#fcd6a4" stroke-width="2.2" stroke-linejoin="round" />
<path d="M124.7 112C124.6 120 124.5 142.8 124 160C123.5 177.2 122.3 205.8 122 215" fill="none" stroke="#e0b070" stroke-width="3.1" stroke-linejoin="round"/>
<path d="M124.7 112C124.6 120 124.5 142.8 124 160C123.5 177.2 122.3 205.8 122 215" fill="none" stroke="#fcd6a4" stroke-width="2.2" stroke-linejoin="round" />
<path d="M-1.6 98.7C1.3 100.3 10.4 104.3 16 108.3C21.6 112.3 29.6 120 32 122.7C34.4 125.4 29.3 121.5 30.4 124.5C31.5 127.5 36.8 135.2 38.4 140.5C40 145.8 38.9 151.2 40 156.5C41.1 161.8 43.7 167.2 44.8 172.5C45.9 177.9 45.1 181.6 46.4 188.5C47.7 195.5 50.9 206.1 52.8 214.1C54.7 222.1 56.3 230.4 57.6 236.5C59 242.7 60.3 248.5 60.8 250.9" fill="none" stroke="#d98a70" stroke-width="3.3" stroke-linejoin="round"/>
<path d="M-1.6 98.7C1.3 100.3 10.4 104.3 16 108.3C21.6 112.3 29.6 120 32 122.7C34.4 125.4 29.3 121.5 30.4 124.5C31.5 127.5 36.8 135.2 38.4 140.5C40 145.8 38.9 151.2 40 156.5C41.1 161.8 43.7 167.2 44.8 172.5C45.9 177.9 45.1 181.6 46.4 188.5C47.7 195.5 50.9 206.1 52.8 214.1C54.7 222.1 56.3 230.4 57.6 236.5C59 242.7 60.3 248.5 60.8 250.9" fill="none" stroke="#f9b29c" stroke-width="2.4" stroke-linejoin="round" />
<path d="M67.2 122.9C68.8 124.2 73.1 128.8 76.8 130.9C80.6 133 85.4 133.8 89.6 135.7C93.9 137.6 99 141.3 102.4 142.1C105.9 142.9 106.2 140 110.4 140.5C114.7 141 122.4 143.7 128 145.3C133.6 146.9 137.9 148.8 144 150.1C150.2 151.4 161.5 152.8 165 153.3C168.5 153.8 163.1 153 165 153.3C166.9 153.6 174.3 154.6 176.2 154.9" fill="none" stroke="#d98a70" stroke-width="3.3" stroke-linejoin="round"/>
<path d="M67.2 122.9C68.8 124.2 73.1 128.8 76.8 130.9C80.6 133 85.4 133.8 89.6 135.7C93.9 137.6 99 141.3 102.4 142.1C105.9 142.9 106.2 140 110.4 140.5C114.7 141 122.4 143.7 128 145.3C133.6 146.9 137.9 148.8 144 150.1C150.2 151.4 161.5 152.8 165 153.3C168.5 153.8 163.1 153 165 153.3C166.9 153.6 174.3 154.6 176.2 154.9" fill="none" stroke="#f9b29c" stroke-width="2.4" stroke-linejoin="round" />
<path d="M110.4 122.9C110.2 125.3 110.7 132.2 108.8 137.3C107 142.4 102.4 148.8 99.2 153.3C96 157.8 93.4 161 89.6 164.5C85.9 168 80.6 171.2 76.8 174.1C73.1 177.1 69.6 178.7 67.2 182.1C64.8 185.6 63 190.1 62.4 194.9C61.9 199.7 62.7 205.6 64 210.9C65.4 216.3 67.2 222.9 70.4 226.9C73.6 230.9 79 233.9 83.2 234.9C87.5 236 91.8 235.2 96 233.3C100.3 231.5 104.6 226.7 108.8 223.7C113.1 220.8 117.9 216.8 121.6 215.7C125.4 214.7 127.5 215.5 131.2 217.3C135 219.2 140.3 223.2 144 226.9C147.8 230.7 150.7 235.7 153.6 239.7C156.6 243.7 160.3 249.1 161.7 250.9" fill="none" stroke="#d98a70" stroke-width="3.3" stroke-linejoin="round"/>
<path d="M110.4 122.9C110.2 125.3 110.7 132.2 108.8 137.3C107 142.4 102.4 148.8 99.2 153.3C96 157.8 93.4 161 89.6 164.5C85.9 168 80.6 171.2 76.8 174.1C73.1 177.1 69.6 178.7 67.2 182.1C64.8 185.6 63 190.1 62.4 194.9C61.9 199.7 62.7 205.6 64 210.9C65.4 216.3 67.2 222.9 70.4 226.9C73.6 230.9 79 233.9 83.2 234.9C87.5 236 91.8 235.2 96 233.3C100.3 231.5 104.6 226.7 108.8 223.7C113.1 220.8 117.9 216.8 121.6 215.7C125.4 214.7 127.5 215.5 131.2 217.3C135 219.2 140.3 223.2 144 226.9C147.8 230.7 150.7 235.7 153.6 239.7C156.6 243.7 160.3 249.1 161.7 250.9" fill="none" stroke="#f9b29c" stroke-width="2.4" stroke-linejoin="round" />
<path d="M-1.6 191.7C-0.3 193.9 4 199.7 6.4 204.5C8.8 209.3 9.9 215.2 12.8 220.5C15.7 225.9 20.8 231.7 24 236.5C27.2 241.4 29.3 247.3 32 249.5C34.7 251.7 36.8 247.9 40 249.5C43.2 251.1 48.8 255.4 51.2 259.1C53.6 262.8 53.6 266.8 54.4 271.9C55.2 277 55 285.9 56 289.5C57.1 293.1 56.8 292.7 60.8 293.5C64.8 294.3 72.8 293.9 80 294.3C87.2 294.7 96 295.1 104 295.9C112 296.7 121.4 298 128 299.1C134.7 300.2 139.8 301.2 144 302.3C148.3 303.4 152 305 153.6 305.5" fill="none" stroke="#d98a70" stroke-width="3.3" stroke-linejoin="round"/>
<path d="M-1.6 191.7C-0.3 193.9 4 199.7 6.4 204.5C8.8 209.3 9.9 215.2 12.8 220.5C15.7 225.9 20.8 231.7 24 236.5C27.2 241.4 29.3 247.3 32 249.5C34.7 251.7 36.8 247.9 40 249.5C43.2 251.1 48.8 255.4 51.2 259.1C53.6 262.8 53.6 266.8 54.4 271.9C55.2 277 55 285.9 56 289.5C57.1 293.1 56.8 292.7 60.8 293.5C64.8 294.3 72.8 293.9 80 294.3C87.2 294.7 96 295.1 104 295.9C112 296.7 121.4 298 128 299.1C134.7 300.2 139.8 301.2 144 302.3C148.3 303.4 152 305 153.6 305.5" fill="none" stroke="#f9b29c" stroke-width="2.4" stroke-linejoin="round" />
<path d="M20.8 220.5C24 218.7 34.1 212 40 209.3C45.9 206.7 50.9 205.9 56 204.5C61.1 203.2 68 201.9 70.4 201.3" fill="none" stroke="#d98a70" stroke-width="3.3" stroke-linejoin="round"/>
<path d="M20.8 220.5C24 218.7 34.1 212 40 209.3C45.9 206.7 50.9 205.9 56 204.5C61.1 203.2 68 201.9 70.4 201.3" fill="none" stroke="#f9b29c" stroke-width="2.4" stroke-linejoin="round" />
<path d="M-1.6 188.5C1.3 186.9 9.1 181.1 16 178.9C22.9 176.8 34.9 176.2 40 175.7C45.1 175.2 45.3 175.7 46.4 175.7" fill="none" stroke="#d98a70" stroke-width="3.3" stroke-linejoin="round"/>
<path d="M-1.6 188.5C1.3 186.9 9.1 181.1 16 178.9C22.9 176.8 34.9 176.2 40 175.7C45.1 175.2 45.3 175.7 46.4 175.7" fill="none" stroke="#f9b29c" stroke-width="2.4" stroke-linejoin="round" />
<path d="M96 79.5C96.8 82.2 99.8 90.2 100.8 95.5C101.9 100.9 102.7 106.7 102.4 111.5C102.2 116.4 101.4 122.3 99.2 124.5C97.1 126.7 93.4 122.9 89.6 124.5C85.9 126.1 81.1 130.1 76.8 134.1C72.6 138.1 68.8 145.6 64 148.5C59.2 151.4 52.6 150.6 48 151.7C43.5 152.8 38.7 154.4 36.8 154.9" fill="none" stroke="#d98a70" stroke-width="3.3" stroke-linejoin="round"/>
<path d="M96 79.5C96.8 82.2 99.8 90.2 100.8 95.5C101.9 100.9 102.7 106.7 102.4 111.5C102.2 116.4 101.4 122.3 99.2 124.5C97.1 126.7 93.4 122.9 89.6 124.5C85.9 126.1 81.1 130.1 76.8 134.1C72.6 138.1 68.8 145.6 64 148.5C59.2 151.4 52.6 150.6 48 151.7C43.5 152.8 38.7 154.4 36.8 154.9" fill="none" stroke="#f9b29c" stroke-width="2.4" stroke-linejoin="round" />
<path d="M-1.6 113.1C6.7 113.3 34.9 114.1 48 113.9C61.1 113.8 72 112.6 76.8 112.3" fill="none" stroke="#d98a70" stroke-width="3.3" stroke-linejoin="round"/>
<path d="M-1.6 113.1C6.7 113.3 34.9 114.1 48 113.9C61.1 113.8 72 112.6 76.8 112.3" fill="none" stroke="#f9b29c" stroke-width="2.4" stroke-linejoin="round" />
<path d="M150.4 79.5C151 83.5 153.1 96 153.6 103.5C154.2 111 153.6 121 153.6 124.5C153.6 128 152.6 121.3 153.6 124.5C154.7 127.7 157.9 139.2 160.1 143.7C162.2 148.2 165.4 150.4 166.5 151.7" fill="none" stroke="#d98a70" stroke-width="3.3" stroke-linejoin="round"/>
<path d="M150.4 79.5C151 83.5 153.1 96 153.6 103.5C154.2 111 153.6 121 153.6 124.5C153.6 128 152.6 121.3 153.6 124.5C154.7 127.7 157.9 139.2 160.1 143.7C162.2 148.2 165.4 150.4 166.5 151.7" fill="none" stroke="#f9b29c" stroke-width="2.4" stroke-linejoin="round" />
<path d="M165 85.9C166.1 87.5 169.3 91.3 171.4 95.5C173.5 99.8 176.5 106.5 177.8 111.5C179.1 116.6 179.1 123.5 179.4 125.9" fill="none" stroke="#d98a70" stroke-width="3.3" stroke-linejoin="round"/>
<path d="M165 85.9C166.1 87.5 169.3 91.3 171.4 95.5C173.5 99.8 176.5 106.5 177.8 111.5C179.1 116.6 179.1 123.5 179.4 125.9" fill="none" stroke="#f9b29c" stroke-width="2.4" stroke-linejoin="round" />
<path d="M237 52.3C237.8 53.7 240 57.7 241.8 60.3C243.7 63 247.2 67 248.2 68.3" fill="none" stroke="#d98a70" stroke-width="3.3" stroke-linejoin="round"/>
<path d="M237 52.3C237.8 53.7 240 57.7 241.8 60.3C243.7 63 247.2 67 248.2 68.3" fill="none" stroke="#f9b29c" stroke-width="2.4" stroke-linejoin="round" />
<path d="M261 76.3C262.1 78.5 266.4 83.3 267.4 89.1C268.5 95 267.2 105.4 267.4 111.5C267.7 117.7 268.8 123.5 269 125.9" fill="none" stroke="#d98a70" stroke-width="3.3" stroke-linejoin="round"/>
<path d="M261 76.3C262.1 78.5 266.4 83.3 267.4 89.1C268.5 95 267.2 105.4 267.4 111.5C267.7 117.7 268.8 123.5 269 125.9" fill="none" stroke="#f9b29c" stroke-width="2.4" stroke-linejoin="round" />
<path d="M289.8 125.9C291.7 124.3 297.8 118.7 301 116.3C304.2 113.9 306.1 111.3 309 111.5C312 111.8 314.9 116.2 318.6 117.9C322.4 119.7 326.9 121.9 331.5 121.9C336 121.9 340.9 120.2 346 117.9C351.1 115.7 357.2 109.4 362 108.3C366.8 107.3 371.3 108.6 374.8 111.5C378.3 114.5 381.5 123.5 382.8 125.9" fill="none" stroke="#d98a70" stroke-width="3.3" stroke-linejoin="round"/>
<path d="M289.8 125.9C291.7 124.3 297.8 118.7 301 116.3C304.2 113.9 306.1 111.3 309 111.5C312 111.8 314.9 116.2 318.6 117.9C322.4 119.7 326.9 121.9 331.5 121.9C336 121.9 340.9 120.2 346 117.9C351.1 115.7 357.2 109.4 362 108.3C366.8 107.3 371.3 108.6 374.8 111.5C378.3 114.5 381.5 123.5 382.8 125.9" fill="none" stroke="#f9b29c" stroke-width="2.4" stroke-linejoin="round" />
<path d="M163.4 220.5C166.3 219.5 177.8 219.5 181 214.1C184.2 208.8 182.5 194.9 182.6 188.5C182.7 182.1 181.9 177.9 181.8 175.7" fill="none" stroke="#d98a70" stroke-width="3.3" stroke-linejoin="round"/>
<path d="M163.4 220.5C166.3 219.5 177.8 219.5 181 214.1C184.2 208.8 182.5 194.9 182.6 188.5C182.7 182.1 181.9 177.9 181.8 175.7" fill="none" stroke="#f9b29c" stroke-width="2.4" stroke-linejoin="round" />
<path d="M229 204.5C226.4 206.9 218.4 214.1 213 218.9C207.7 223.7 202.3 228.2 197 233.3C191.7 238.4 185 245.2 181 249.5C177 253.8 173.8 253.8 173 259.1C172.2 264.4 176.5 275.1 176.2 281.5C175.9 287.9 173.3 292.7 171.4 297.5C169.5 302.3 168.2 305.8 165 310.3C161.8 314.9 155.5 319.9 152 324.7C148.6 329.5 143.8 334.3 144 339.1C144.3 343.9 149.9 349.7 153.6 353.5C157.4 357.4 164.3 360.9 166.5 362.3" fill="none" stroke="#d98a70" stroke-width="3.3" stroke-linejoin="round"/>
<path d="M229 204.5C226.4 206.9 218.4 214.1 213 218.9C207.7 223.7 202.3 228.2 197 233.3C191.7 238.4 185 245.2 181 249.5C177 253.8 173.8 253.8 173 259.1C172.2 264.4 176.5 275.1 176.2 281.5C175.9 287.9 173.3 292.7 171.4 297.5C169.5 302.3 168.2 305.8 165 310.3C161.8 314.9 155.5 319.9 152 324.7C148.6 329.5 143.8 334.3 144 339.1C144.3 343.9 149.9 349.7 153.6 353.5C157.4 357.4 164.3 360.9 166.5 362.3" fill="none" stroke="#f9b29c" stroke-width="2.4" stroke-linejoin="round" />
<path d="M165 286.3C163.9 289 160.9 297.8 158.5 302.3C156 306.9 153.4 310.1 150.4 313.5C147.5 317 143.5 319.9 140.8 323.1C138.2 326.3 135.5 331.1 134.4 332.7" fill="none" stroke="#d98a70" stroke-width="3.3" stroke-linejoin="round"/>
<path d="M165 286.3C163.9 289 160.9 297.8 158.5 302.3C156 306.9 153.4 310.1 150.4 313.5C147.5 317 143.5 319.9 140.8 323.1C138.2 326.3 135.5 331.1 134.4 332.7" fill="none" stroke="#f9b29c" stroke-width="2.4" stroke-linejoin="round" />
<path d="M172 89C173.5 91.7 179.2 94.8 181 105C182.8 115.2 182.3 133.2 182.5 150C182.7 166.8 182.1 196.7 182 206" fill="none" stroke="#d98a70" stroke-width="3.3" stroke-linejoin="round"/>
<path d="M172 89C173.5 91.7 179.2 94.8 181 105C182.8 115.2 182.3 133.2 182.5 150C182.7 166.8 182.1 196.7 182 206" fill="none" stroke="#f9b29c" stroke-width="2.4" stroke-linejoin="round" />
<path d="M159.6 77C159.6 82.8 159.3 100.7 159.6 112C159.9 123.3 160.5 137.3 161.6 145C162.7 152.7 165.3 155.8 166 158" fill="none" stroke="#d98a70" stroke-width="3.3" stroke-linejoin="round"/>
<path d="M159.6 77C159.6 82.8 159.3 100.7 159.6 112C159.9 123.3 160.5 137.3 161.6 145C162.7 152.7 165.3 155.8 166 158" fill="none" stroke="#f9b29c" stroke-width="2.4" stroke-linejoin="round" />
<path d="M262.6 191.7C264 194.4 267.7 202.4 270.6 207.7C273.6 213.1 277.6 218.9 280.2 223.7C282.9 228.5 285 232.2 286.6 236.5C288.2 240.8 289.3 247.3 289.8 249.5C290.4 251.7 290.4 247.4 289.8 249.5C289.3 251.6 288.2 258 286.6 262.3C285 266.6 281.3 273 280.2 275.1" fill="none" stroke="#f6c3b2" stroke-width="1.8" stroke-linejoin="round" />
<path d="M214.6 48.3C217 48.7 224 49.2 229 50.7C234.1 52.2 239.7 55.3 245 57.1C250.4 59 255.7 60.6 261 61.9C266.4 63.3 271.7 64.1 277 65.1C282.4 66.2 288.2 68.1 293 68.3C297.8 68.6 299.7 69.4 305.8 66.7C312 64.1 323.3 54.2 330 52.3C336.7 50.4 342.5 51.5 346 55.5C349.5 59.5 348.1 69.7 350.8 76.3C353.5 83 359.3 89.7 362 95.5C364.7 101.4 365.2 106.5 366.8 111.5C368.4 116.6 370.8 123.5 371.6 125.9" fill="none" stroke="#8a8a8a" stroke-width="1.1" stroke-linejoin="round" />
<path d="M144 -2.1C145.1 2.2 150.4 12.6 150.4 23.5C150.4 34.4 146.2 51.5 144 63.5C141.9 75.5 139 85.1 137.6 95.5C136.3 105.9 136.3 120.9 136 125.9" fill="none" stroke="#8a8a8a" stroke-width="1.1" stroke-linejoin="round" />
<path d="M44.8 122.9C46.4 126.4 51.7 139.2 54.4 143.7C57.1 148.2 59.8 149 60.8 150.1" fill="none" stroke="#8a8a8a" stroke-width="1.1" stroke-linejoin="round" />
<path d="M235.4 254.3C234.4 256.2 230.1 261.5 229 265.5C228 269.5 227.7 274.8 229 278.3C230.4 281.8 232.8 285.2 237 286.3C241.3 287.4 248.5 285.2 254.6 284.7C260.8 284.2 268 284.4 273.8 283.1C279.7 281.8 285.3 278 289.8 276.7C294.4 275.4 299.2 275.4 301 275.1" fill="none" stroke="#8a8a8a" stroke-width="1.1" stroke-linejoin="round" />
<path d="M40 249.5C44 251.6 57.4 258.6 64 262.3C70.7 266 75.8 268.2 80 271.9C84.3 275.6 86.4 280.7 89.6 284.7C92.8 288.7 92.8 293.5 99.2 295.9C105.6 298.3 119.5 297.8 128 299.1C136.6 300.4 145.6 301 150.4 303.9C155.2 306.9 154.2 314.1 156.9 316.7C159.5 319.4 164.9 319.4 166.5 319.9" fill="none" stroke="#8a8a8a" stroke-width="1.1" stroke-linejoin="round" />
<path d="M195.4 177.3C195.5 182.9 193.3 204.9 196.2 210.9C199.1 216.9 207.5 212 213 213.3C218.5 214.7 225 216.1 229 218.9C233 221.7 235.7 224.8 237 230.1C238.4 235.5 237 247.5 237 250.9" fill="none" stroke="#8a8a8a" stroke-width="1.1" stroke-linejoin="round" />
<path d="M419.6 124.5C423.4 122.7 434.3 116.9 442 113.5C449.8 110 457 106.9 466 103.9C475.1 100.8 491.4 96.5 496.5 95.1" fill="none" stroke="#8a8a8a" stroke-width="1.1" stroke-linejoin="round" />
<path d="M-1.6 20.3L16 23.5" fill="none" stroke="#8a8a8a" stroke-width="1.1" stroke-linejoin="round" />
<path d="M-1.6 95.5C2.7 96.1 16.8 93.9 24 98.7C31.2 103.6 38.7 120.2 41.6 124.5" fill="none" stroke="#8a8a8a" stroke-width="1.1" stroke-linejoin="round" />
<path d="M0 223.7C1.6 225.9 5.3 233.9 9.6 236.5C13.9 239.2 20.3 237.3 25.6 239.7C30.9 242.1 38.9 249.1 41.6 250.9" fill="none" stroke="#8a8a8a" stroke-width="1.1" stroke-linejoin="round" />
<path d="M209.8 236.5C211.7 236.5 216.7 235.7 221 236.5C225.3 237.3 232 239.2 235.4 241.3C238.9 243.5 238.6 247.1 241.8 249.5C245 251.9 249.3 253.8 254.6 255.9C260 258 267.4 260.4 273.8 262.3C280.2 264.2 287.2 265.8 293 267.1C298.9 268.4 304.8 269.2 309 270.3C313.3 271.4 317 273 318.6 273.5" fill="none" stroke="#cf6d84" stroke-width="3.6999999999999997" stroke-linejoin="round"/>
<path d="M209.8 236.5C211.7 236.5 216.7 235.7 221 236.5C225.3 237.3 232 239.2 235.4 241.3C238.9 243.5 238.6 247.1 241.8 249.5C245 251.9 249.3 253.8 254.6 255.9C260 258 267.4 260.4 273.8 262.3C280.2 264.2 287.2 265.8 293 267.1C298.9 268.4 304.8 269.2 309 270.3C313.3 271.4 317 273 318.6 273.5" fill="none" stroke="#e892a2" stroke-width="2.8" stroke-linejoin="round" />
<path d="M219.4 348.7C216.7 348.9 209.8 348.7 203.4 349.5C197 350.3 187.4 352.9 181 353.5C174.6 354.2 169.6 352.5 165 353.5C160.5 354.6 157.1 358.1 153.6 359.9C150.2 361.8 146.4 362.1 144 364.7C141.6 367.4 140 374.1 139.2 375.9" fill="none" stroke="#cf6d84" stroke-width="3.3" stroke-linejoin="round"/>
<path d="M219.4 348.7C216.7 348.9 209.8 348.7 203.4 349.5C197 350.3 187.4 352.9 181 353.5C174.6 354.2 169.6 352.5 165 353.5C160.5 354.6 157.1 358.1 153.6 359.9C150.2 361.8 146.4 362.1 144 364.7C141.6 367.4 140 374.1 139.2 375.9" fill="none" stroke="#e892a2" stroke-width="2.4" stroke-linejoin="round" />
<path d="M466 79.5C467.4 81.1 470.6 88.6 474 89.1C477.5 89.7 483.1 84.3 486.9 82.7C490.6 81.1 494.9 80.1 496.5 79.5" fill="none" stroke="#e892a2" stroke-width="1.6" stroke-linejoin="round" />
<path d="M49.6 307.4C49.3 305.8 46.7 299.4 48 297.5C49.3 295.6 56.3 294.3 57.6 295.9C59 297.5 56.3 305.3 56 307.1" fill="none" stroke="#e892a2" stroke-width="2" stroke-linejoin="round" />
<path d="M140.8 353.5C141.4 355.4 142.4 361.8 144 364.7C145.6 367.7 147.8 370.6 150.4 371.1C153.1 371.7 158.5 368.5 160.1 367.9" fill="none" stroke="#e892a2" stroke-width="2" stroke-linejoin="round" />
<path d="M387.6 183.7C390 184.5 397.2 185.9 402 188.5C406.8 191.2 412.2 195.5 416.4 199.7C420.7 204 424.7 209.3 427.6 214.1C430.6 218.9 432.2 224 434 228.5C435.9 233.1 437.5 237.8 438.8 241.3C440.2 244.8 439.6 246 442 249.5C444.4 253 450.6 257.5 453.2 262.3C455.9 267.1 456.4 272.7 458 278.3C459.6 283.9 460.2 290.6 462.8 295.9C465.5 301.2 470.6 305.8 474 310.3C477.5 314.9 479.9 320.3 483.6 323.1C487.4 325.9 494.3 326.5 496.5 327.1" fill="none" stroke="#cf6d84" stroke-width="4.1000000000000005" stroke-linejoin="round"/>
<path d="M387.6 183.7C390 184.5 397.2 185.9 402 188.5C406.8 191.2 412.2 195.5 416.4 199.7C420.7 204 424.7 209.3 427.6 214.1C430.6 218.9 432.2 224 434 228.5C435.9 233.1 437.5 237.8 438.8 241.3C440.2 244.8 439.6 246 442 249.5C444.4 253 450.6 257.5 453.2 262.3C455.9 267.1 456.4 272.7 458 278.3C459.6 283.9 460.2 290.6 462.8 295.9C465.5 301.2 470.6 305.8 474 310.3C477.5 314.9 479.9 320.3 483.6 323.1C487.4 325.9 494.3 326.5 496.5 327.1" fill="none" stroke="#eda3b0" stroke-width="3.2" stroke-linejoin="round" />
<path d="M496.5 21.1C492.7 23.1 480.4 29.5 474 33.1C467.6 36.7 461.8 39 458 42.7C454.3 46.4 453.2 50.7 451.6 55.5C450 60.3 450 64.9 448.4 71.5C446.8 78.2 443.9 88.9 442 95.5C440.2 102.2 438.8 106.7 437.2 111.5C435.6 116.4 435.4 121.3 432.4 124.5C429.5 127.7 424.2 128.2 419.6 130.9C415.1 133.6 409.2 136.2 405.2 140.5C401.2 144.8 397.8 151.2 395.6 156.5C393.5 161.8 394.6 168 392.4 172.5C390.3 177.1 387.1 180.3 382.8 183.7C378.5 187.2 372.1 190.1 366.8 193.3C361.5 196.5 355.6 199.5 350.8 202.9C346 206.4 341.5 210.1 338 214.1C334.5 218.1 332 222.7 330 226.9C328 231.2 326.9 236 325.9 239.7C324.8 243.5 324.7 243.9 323.5 249.5C322.3 255.1 320 265.5 318.6 273.5C317.3 281.5 317 290.3 315.4 297.5C313.8 304.7 312.2 311.1 309 316.7C305.8 322.3 301.6 327.4 296.2 331.1C290.9 334.9 284 337.5 277 339.1C270.1 340.7 261.6 340.5 254.6 340.7C247.7 341 240.5 339.9 235.4 340.7C230.4 341.5 227.7 342.6 224.2 345.5C220.8 348.5 217.6 353.3 214.6 358.3C211.7 363.4 207.9 373 206.6 375.9" fill="none" stroke="#cf6d84" stroke-width="4.5" stroke-linejoin="round"/>
<path d="M496.5 21.1C492.7 23.1 480.4 29.5 474 33.1C467.6 36.7 461.8 39 458 42.7C454.3 46.4 453.2 50.7 451.6 55.5C450 60.3 450 64.9 448.4 71.5C446.8 78.2 443.9 88.9 442 95.5C440.2 102.2 438.8 106.7 437.2 111.5C435.6 116.4 435.4 121.3 432.4 124.5C429.5 127.7 424.2 128.2 419.6 130.9C415.1 133.6 409.2 136.2 405.2 140.5C401.2 144.8 397.8 151.2 395.6 156.5C393.5 161.8 394.6 168 392.4 172.5C390.3 177.1 387.1 180.3 382.8 183.7C378.5 187.2 372.1 190.1 366.8 193.3C361.5 196.5 355.6 199.5 350.8 202.9C346 206.4 341.5 210.1 338 214.1C334.5 218.1 332 222.7 330 226.9C328 231.2 326.9 236 325.9 239.7C324.8 243.5 324.7 243.9 323.5 249.5C322.3 255.1 320 265.5 318.6 273.5C317.3 281.5 317 290.3 315.4 297.5C313.8 304.7 312.2 311.1 309 316.7C305.8 322.3 301.6 327.4 296.2 331.1C290.9 334.9 284 337.5 277 339.1C270.1 340.7 261.6 340.5 254.6 340.7C247.7 341 240.5 339.9 235.4 340.7C230.4 341.5 227.7 342.6 224.2 345.5C220.8 348.5 217.6 353.3 214.6 358.3C211.7 363.4 207.9 373 206.6 375.9" fill="none" stroke="#e892a2" stroke-width="3.6" stroke-linejoin="round" />
<path d="M-1.6 343.1C0.8 341.4 8.3 336.6 12.8 332.7C17.3 328.9 21.3 323.7 25.6 319.9C29.9 316.2 34.4 312.4 38.4 310.3C42.4 308.2 45.3 307.2 49.6 307.4C53.9 307.7 60 309.8 64 311.9C68 314 70.4 317.3 73.6 319.9C76.8 322.6 79.5 325.5 83.2 327.9C87 330.3 91.2 332.7 96 334.3C100.8 335.9 107.2 336.9 112 337.5C116.8 338.2 121.4 337.3 124.8 338.3C128.3 339.4 130.2 341.4 132.8 343.9C135.5 346.5 138.2 350.6 140.8 353.5C143.5 356.5 146.7 357.8 148.8 361.5C151 365.3 152.8 373.5 153.6 375.9" fill="none" stroke="#cf6d84" stroke-width="4.3" stroke-linejoin="round"/>
<path d="M-1.6 343.1C0.8 341.4 8.3 336.6 12.8 332.7C17.3 328.9 21.3 323.7 25.6 319.9C29.9 316.2 34.4 312.4 38.4 310.3C42.4 308.2 45.3 307.2 49.6 307.4C53.9 307.7 60 309.8 64 311.9C68 314 70.4 317.3 73.6 319.9C76.8 322.6 79.5 325.5 83.2 327.9C87 330.3 91.2 332.7 96 334.3C100.8 335.9 107.2 336.9 112 337.5C116.8 338.2 121.4 337.3 124.8 338.3C128.3 339.4 130.2 341.4 132.8 343.9C135.5 346.5 138.2 350.6 140.8 353.5C143.5 356.5 146.7 357.8 148.8 361.5C151 365.3 152.8 373.5 153.6 375.9" fill="none" stroke="#e892a2" stroke-width="3.4" stroke-linejoin="round" />
<path d="M-1.6 74.7C4.5 75.5 26.1 78.7 35.2 79.5C44.3 80.3 46.7 80.3 52.8 79.5C59 78.7 65.9 76.3 72 74.7C78.2 73.1 83 71 89.6 69.9C96.3 68.9 104.8 68.3 112 68.3C119.2 68.3 126.7 68.9 132.8 69.9C139 71 143.5 72.6 148.8 74.7C154.2 76.9 158.3 81.4 165 82.7C171.7 84.1 181 82.3 189 82.7C197 83.1 205 84.5 213 85.1C221 85.8 230.1 86.1 237 86.7C244 87.4 249.3 88.7 254.6 89.1C260 89.5 264 88.3 269 89.1C274.1 89.9 279.7 92.1 285 93.9C290.4 95.8 295.7 98.2 301 100.3C306.4 102.5 312.2 105.3 317 106.7C321.9 108.2 322.5 109.8 330 109.1C337.5 108.5 351.3 104.5 362 102.7C372.7 101 384.7 99.9 394 98.7C403.4 97.5 411.6 97.1 418 95.5C424.4 93.9 427.9 91.5 432.4 89.1C437 86.7 439.6 83 445.2 81.1C450.8 79.3 457.5 81 466 77.9C474.6 74.9 491.4 65.3 496.5 62.7" fill="none" stroke="#cf6d84" stroke-width="6.1000000000000005" stroke-linejoin="round"/>
<path d="M-1.6 74.7C4.5 75.5 26.1 78.7 35.2 79.5C44.3 80.3 46.7 80.3 52.8 79.5C59 78.7 65.9 76.3 72 74.7C78.2 73.1 83 71 89.6 69.9C96.3 68.9 104.8 68.3 112 68.3C119.2 68.3 126.7 68.9 132.8 69.9C139 71 143.5 72.6 148.8 74.7C154.2 76.9 158.3 81.4 165 82.7C171.7 84.1 181 82.3 189 82.7C197 83.1 205 84.5 213 85.1C221 85.8 230.1 86.1 237 86.7C244 87.4 249.3 88.7 254.6 89.1C260 89.5 264 88.3 269 89.1C274.1 89.9 279.7 92.1 285 93.9C290.4 95.8 295.7 98.2 301 100.3C306.4 102.5 312.2 105.3 317 106.7C321.9 108.2 322.5 109.8 330 109.1C337.5 108.5 351.3 104.5 362 102.7C372.7 101 384.7 99.9 394 98.7C403.4 97.5 411.6 97.1 418 95.5C424.4 93.9 427.9 91.5 432.4 89.1C437 86.7 439.6 83 445.2 81.1C450.8 79.3 457.5 81 466 77.9C474.6 74.9 491.4 65.3 496.5 62.7" fill="none" stroke="#e892a2" stroke-width="5.2" stroke-linejoin="round" />
<path d="M370 -2.1C374 1.6 389 11.2 394 20.3C399.1 29.4 401 44.3 400.4 52.3C399.9 60.3 393.8 62.7 390.8 68.3C387.9 73.9 385.5 80.3 382.8 85.9C380.1 91.5 376.1 99.3 374.8 101.9" fill="none" stroke="#a07fb0" stroke-width="1.3" stroke-linejoin="round" opacity=".65"/>
<path d="M451.6 -0.5C452.7 1.6 454.3 7 458 12.3C461.8 17.6 467.6 26.4 474 31.5C480.4 36.6 492.7 40.8 496.5 42.7" fill="none" stroke="#a07fb0" stroke-width="1.3" stroke-linejoin="round" opacity=".65"/>
<path d="M374.8 146.9C375.9 150.1 376.7 160.5 381.2 166.1C385.8 171.7 395.6 176.8 402 180.5C408.4 184.3 413.5 185.3 419.6 188.5C425.8 191.7 432.4 197.1 438.8 199.7C445.2 202.4 451.1 204.8 458 204.5C465 204.3 474.8 198.9 480.4 198.1C486 197.3 490.1 197.1 491.7 199.7C493.3 202.4 490.3 211.7 490.1 214.1" fill="none" stroke="#a07fb0" stroke-width="1.3" stroke-linejoin="round" opacity=".65"/>
<path d="M328.4 238.1C330.8 236.3 337.2 229.3 342.8 226.9C348.4 224.5 355.1 223.2 362 223.7C368.9 224.3 377.7 231.2 384.4 230.1C391.1 229.1 397.8 220.5 402 217.3C406.3 214.1 406 211.5 410 210.9C414 210.4 420.7 213.1 426 214.1C431.4 215.2 436.7 217.1 442 217.3C447.4 217.6 452.7 216.3 458 215.7C463.4 215.2 468.7 214.1 474 214.1C479.4 214.1 487.4 215.5 490.1 215.7" fill="none" stroke="#a07fb0" stroke-width="1.3" stroke-linejoin="round" opacity=".65"/>
<path d="M328.4 294.3C329.7 297.5 335.3 306.1 336.4 313.5C337.5 321 332.4 333.8 334.8 339.1C337.2 344.5 345.2 343.9 350.8 345.5C356.4 347.1 363.6 346.6 368.4 348.7C373.2 350.9 377.5 355.1 379.6 358.3C381.7 361.5 384.2 365.4 381.2 367.9C378.3 370.5 365.2 372.6 362 373.5" fill="none" stroke="#a07fb0" stroke-width="1.3" stroke-linejoin="round" opacity=".65"/>
<path d="M165 265.5C165.5 269.5 166.1 282.6 168.2 289.5C170.3 296.4 173 303.1 177.8 307.1C182.6 311.1 191.1 312.5 197 313.5C202.9 314.6 209 310.9 213 313.5C217 316.2 218.9 323.1 221 329.5C223.2 335.9 224 346.1 225.8 351.9C227.7 357.8 227.4 361.5 232.2 364.7C237 367.9 247.2 370.6 254.6 371.1C262.1 371.7 270.6 367.1 277 367.9C283.4 368.7 290.4 374.6 293 375.9" fill="none" stroke="#a07fb0" stroke-width="1.3" stroke-linejoin="round" opacity=".65"/>
<path d="M89.6 124.5C90.7 117 98.2 92.9 96 79.5C93.9 66.2 84.8 54.5 76.8 44.3C68.8 34.2 56.8 25.1 48 18.7C39.2 12.3 32 8.6 24 5.9C16 3.2 4 3.2 0 2.7" fill="none" stroke="#a07fb0" stroke-width="1.3" stroke-linejoin="round" opacity=".65"/>
<path d="M432.4 257.5C431.9 259.4 427.4 266 429.2 268.7C431.1 271.4 441.5 270.6 443.6 273.5C445.8 276.4 445 283.1 442 286.3C439.1 289.5 429 288.2 426 292.7C423.1 297.2 424.2 307.4 424.4 313.5C424.7 319.7 430.6 324.2 427.6 329.5C424.7 334.9 414 340.5 406.8 345.5C399.6 350.6 388.2 357.5 384.4 359.9" fill="none" stroke="#8d7f99" stroke-width="0.9" stroke-linejoin="round" stroke-dasharray="3 1.5 .8 1.5" opacity=".8"/>
<path d="M165 50.7C167.7 48.3 174.3 39.2 181 36.3C187.7 33.4 197 36 205 33.1C213 30.2 221 21.9 229 18.7C237 15.5 248 17.1 253 13.9C258.1 10.7 258.4 1.9 259.4 -0.5" fill="none" stroke="#8d7f99" stroke-width="0.9" stroke-linejoin="round" stroke-dasharray="3 1.5 .8 1.5" opacity=".8"/>
<path d="M25.6 319.9C28.3 325.3 37.9 342.6 41.6 351.9C45.3 361.3 46.9 371.9 48 375.9" fill="none" stroke="#8d7f99" stroke-width="0.9" stroke-linejoin="round" stroke-dasharray="3 1.5 .8 1.5" opacity=".8"/>
<path d="M128 310.3C125.4 315.1 118.4 331.1 112 339.1C105.6 347.1 98.2 353 89.6 358.3C81.1 363.7 65.6 369 60.8 371.1" fill="none" stroke="#8d7f99" stroke-width="0.9" stroke-linejoin="round" stroke-dasharray="3 1.5 .8 1.5" opacity=".8"/>
<path d="M309 185.3C309.8 186.9 315.4 191.2 313.8 194.9C312.2 198.7 304 201.3 299.4 207.7C294.9 214.1 290.4 226.9 286.6 233.3C282.9 239.7 278.6 244 277 246.1" fill="none" stroke="#8d7f99" stroke-width="0.9" stroke-linejoin="round" stroke-dasharray="3 1.5 .8 1.5" opacity=".8"/>
<path d="M275.4 288.7L285 295.1L294.6 300.7L305 305.5L313.8 310.3L311.4 321.5L309 331.1L306.6 343.1L305.5 354.3L304.9 361.5" fill="none" stroke="#777" stroke-width=".6"/>
<circle cx="275.4" cy="288.7" r="1.1" fill="#111"/>
<circle cx="285" cy="295.1" r="1.1" fill="#111"/>
<circle cx="294.6" cy="300.7" r="1.1" fill="#111"/>
<circle cx="305" cy="305.5" r="1.1" fill="#111"/>
<circle cx="313.8" cy="310.3" r="1.1" fill="#111"/>
<circle cx="311.4" cy="321.5" r="1.1" fill="#111"/>
<circle cx="309" cy="331.1" r="1.1" fill="#111"/>
<circle cx="306.6" cy="343.1" r="1.1" fill="#111"/>
<circle cx="305.5" cy="354.3" r="1.1" fill="#111"/>
<path d="M157.2 56.5L160.1 51.1L163 56.5ZM139.5 85.3L142.4 79.9L145.3 85.3ZM171.7 27.7L174.6 22.3L177.5 27.7ZM178.1 24.5L181 19.1L183.9 24.5ZM214.9 34.1L217.8 28.7L220.7 34.1ZM227.7 21.3L230.6 15.9L233.5 21.3ZM248.5 34.1L251.4 28.7L254.3 34.1ZM245.3 39.7L248.2 34.3L251.1 39.7ZM259.7 31.7L262.6 26.3L265.5 31.7ZM269.3 36.5L272.2 31.1L275.1 36.5ZM282.1 45L285 39.6L287.9 45ZM294.9 18.1L297.8 12.7L300.7 18.1ZM306.9 17.6L309.8 12.2L312.7 17.6ZM312.5 26.4L315.4 21L318.3 26.4ZM323 11.7L325.9 6.3L328.8 11.7ZM319.8 46.6L322.7 41.2L325.6 46.6ZM298.9 53.3L301.8 47.9L304.7 53.3ZM314.9 80L317.8 74.6L320.7 80ZM249.3 2.1L252.2 -3.3L255.1 2.1ZM359.9 6.9L362.8 1.5L365.7 6.9ZM382.3 17.6L385.2 12.2L388.1 17.6ZM394.3 24.2L397.2 18.8L400.1 24.2ZM353.5 27.7L356.4 22.3L359.3 27.7ZM362.3 29.3L365.2 23.9L368.1 29.3ZM368.7 34.9L371.6 29.5L374.5 34.9ZM340.7 38.6L343.6 33.2L346.5 38.6ZM362.3 47.7L365.2 42.3L368.1 47.7ZM372.4 48.5L375.3 43.1L378.2 48.5ZM363.1 65.6L366 60.2L368.9 65.6ZM340.7 71.7L343.6 66.3L346.5 71.7ZM363.1 81.3L366 75.9L368.9 81.3ZM410.3 53.3L413.2 47.9L416.1 53.3ZM394.3 76.5L397.2 71.1L400.1 76.5ZM419.1 74.1L422 68.7L424.9 74.1ZM430.3 26.4L433.2 21L436.1 26.4ZM453.5 37.3L456.4 31.9L459.3 37.3ZM466.3 59.7L469.2 54.3L472.1 59.7ZM450.3 5.3L453.2 -0.1L456.1 5.3ZM447.1 106.9L450 101.5L452.9 106.9ZM348.7 117.3L351.6 111.9L354.5 117.3ZM417.5 2.1L420.4 -3.3L423.3 2.1ZM287.7 185.5L290.6 180.1L293.5 185.5ZM304.5 187.1L307.4 181.7L310.3 187.1ZM323 187.9L325.9 182.5L328.8 187.9ZM290.1 197.5L293 192.1L295.9 197.5ZM282.1 201.5L285 196.1L287.9 201.5ZM270.9 209.5L273.8 204.1L276.7 209.5ZM282.9 210.3L285.8 204.9L288.7 210.3ZM297.3 211.9L300.2 206.5L303.1 211.9ZM293.3 219.9L296.2 214.5L299.1 219.9ZM291.7 226.3L294.6 220.9L297.5 226.3ZM263.7 226.3L266.6 220.9L269.5 226.3ZM272.5 225.5L275.4 220.1L278.3 225.5ZM246.1 229.5L249 224.1L251.9 229.5ZM220.5 235.9L223.4 230.5L226.3 235.9ZM262.9 244.7L265.8 239.3L268.7 244.7ZM277.3 243.9L280.2 238.5L283.1 243.9ZM282.1 235.9L285 230.5L287.9 235.9ZM287.7 246.3L290.6 240.9L293.5 246.3ZM308.5 243.1L311.4 237.7L314.3 243.1ZM224.5 248.7L227.4 243.3L230.3 248.7ZM322.2 202.3L325.1 196.9L328 202.3ZM244.5 216.7L247.4 211.3L250.3 216.7ZM335.1 147.9L338 142.5L340.9 147.9ZM362.3 145.5L365.2 140.1L368.1 145.5ZM387.1 138.3L390 132.9L392.9 138.3ZM376.7 156.7L379.6 151.3L382.5 156.7ZM351.9 173.5L354.8 168.1L357.7 173.5ZM347.1 179.9L350 174.5L352.9 179.9ZM375.9 182.3L378.8 176.9L381.7 182.3ZM351.1 195.9L354 190.5L356.9 195.9ZM359.9 197.5L362.8 192.1L365.7 197.5ZM371.1 201.5L374 196.1L376.9 201.5ZM396.7 189.5L399.6 184.1L402.5 189.5ZM403.1 199.9L406 194.5L408.9 199.9ZM401.5 206.3L404.4 200.9L407.3 206.3ZM404.7 215.9L407.6 210.5L410.5 215.9ZM416.7 219.1L419.6 213.7L422.5 219.1ZM417.5 177.5L420.4 172.1L423.3 177.5ZM437.5 143.1L440.4 137.7L443.3 143.1ZM451.9 150.3L454.8 144.9L457.7 150.3ZM462.3 179.1L465.2 173.7L468.1 179.1ZM484 205L486.9 199.6L489.8 205ZM485.6 219.1L488.5 213.7L491.4 219.1ZM470.3 127.9L473.2 122.5L476.1 127.9ZM348.7 229.1L351.6 223.7L354.5 229.1ZM369 229.1L371.9 223.7L374.8 229.1ZM337.5 240.7L340.4 235.3L343.3 240.7ZM395.9 247.9L398.8 242.5L401.7 247.9ZM455.1 250.3L458 244.9L460.9 250.3ZM471.1 249.5L474 244.1L476.9 249.5ZM485.6 247.1L488.5 241.7L491.4 247.1ZM19 282.5L21.9 277.1L24.8 282.5ZM35.5 290L38.4 284.6L41.3 290ZM95.5 316.9L98.4 311.5L101.3 316.9ZM77.9 325.7L80.8 320.3L83.7 325.7ZM123.1 330L126 324.6L128.9 330ZM144.3 313.2L147.2 307.8L150.1 313.2ZM97.9 353.3L100.8 347.9L103.7 353.3ZM77.1 363L80 357.6L82.9 363ZM107.2 365.4L110.1 360L113 365.4ZM10.7 352.6L13.6 347.2L16.5 352.6ZM17.1 360.6L20 355.2L22.9 360.6ZM37.9 368.1L40.8 362.7L43.7 368.1ZM-1.3 354.5L1.6 349.1L4.5 354.5ZM37.9 376.1L40.8 370.7L43.7 376.1ZM194.9 259.3L197.8 253.9L200.7 259.3ZM214.9 257.7L217.8 252.3L220.7 257.7ZM217.3 270.5L220.2 265.1L223.1 270.5ZM230.9 274.5L233.8 269.1L236.7 274.5ZM241.3 259.3L244.2 253.9L247.1 259.3ZM249.3 269.7L252.2 264.3L255.1 269.7ZM258.1 254.5L261 249.1L263.9 254.5ZM224.5 288.1L227.4 282.7L230.3 288.1ZM205.6 301.7L208.5 296.3L211.4 301.7ZM239.7 299L242.6 293.6L245.5 299ZM251.2 295L254.1 289.6L257 295ZM206.4 318L209.3 312.6L212.2 318ZM280.5 265.7L283.4 260.3L286.3 265.7ZM289 262.5L291.9 257.1L294.8 262.5ZM301.3 258.5L304.2 253.1L307.1 258.5ZM306.9 266.5L309.8 261.1L312.7 266.5ZM279.7 277.7L282.6 272.3L285.5 277.7ZM295.4 289.2L298.3 283.8L301.2 289.2ZM276.5 295.6L279.4 290.2L282.3 295.6ZM283.3 306.2L286.2 300.8L289.1 306.2ZM289.7 305.7L292.6 300.3L295.5 305.7ZM310.1 303.3L313 297.9L315.9 303.3ZM313.3 320.6L316.2 315.2L319.1 320.6ZM306.1 334.5L309 329.1L311.9 334.5ZM278.9 329.2L281.8 323.8L284.7 329.2ZM251.2 335.3L254.1 329.9L257 335.3ZM274.1 339.8L277 334.4L279.9 339.8ZM240.5 345.7L243.4 340.3L246.3 345.7ZM251.2 352.5L254.1 347.1L257 352.5ZM281.3 356.5L284.2 351.1L287.1 356.5ZM301.3 351.7L304.2 346.3L307.1 351.7ZM320.6 344.6L323.5 339.2L326.4 344.6ZM309 359.7L311.9 354.3L314.8 359.7ZM295.4 366.5L298.3 361.1L301.2 366.5ZM216.5 363.7L219.4 358.3L222.3 363.7ZM231.7 368.9L234.6 363.5L237.5 368.9ZM267.7 369.7L270.6 364.3L273.5 369.7ZM224.5 373.7L227.4 368.3L230.3 373.7ZM308.5 375.3L311.4 369.9L314.3 375.3ZM247.7 374.5L250.6 369.1L253.5 374.5ZM434 276.1L436.9 270.7L439.8 276.1ZM426.3 295L429.2 289.6L432.1 295ZM466.3 272.9L469.2 267.5L472.1 272.9ZM482 285.7L484.9 280.3L487.8 285.7ZM481.1 315.8L484 310.4L486.9 315.8ZM425.5 333.2L428.4 327.8L431.3 333.2ZM438 330L440.9 324.6L443.8 330ZM454.7 333.2L457.6 327.8L460.5 333.2ZM403.9 348.9L406.8 343.5L409.7 348.9ZM364.7 349.7L367.6 344.3L370.5 349.7ZM330.3 336.1L333.2 330.7L336.1 336.1ZM331.6 344.1L334.5 338.7L337.4 344.1ZM329 290.5L331.9 285.1L334.8 290.5ZM328.7 303.3L331.6 297.9L334.5 303.3ZM327.9 364.9L330.8 359.5L333.7 364.9ZM338 369.7L340.9 364.3L343.8 369.7ZM359.1 374.1L362 368.7L364.9 374.1ZM378.3 368.6L381.2 363.2L384.1 368.6ZM455.1 252.1L458 246.7L460.9 252.1ZM471.1 252.1L474 246.7L476.9 252.1Z" fill="#d78b4f"/>
<path d="M224.2 96.3l.9 3 3.6 2.2v1l-3.6-1 -.3 2.2 1.2 1v.7l-1.8-.5 -1.8.5v-.7l1.2-1 -.3-2.2 -3.6 1v-1l3.6-2.2z" fill="#8461c4"/>
</g>
<g filter="url(#soft2)" text-anchor="middle" fill="#2c2c2c" stroke="#fff" stroke-width="1.8" stroke-linejoin="round" paint-order="stroke" style="paint-order:stroke">
<text x="109.6" y="9.6" font-size="8.1">北投士林科技</text>
<text x="108.8" y="21.6" font-size="8.1">園區</text>
<text x="112" y="40" font-size="8.1">社子</text>
<text x="149.6" y="37.1" font-size="8.8">士林區</text>
<text x="124.8" y="88.8" font-size="8.1">大龍峒</text>
<text x="128" y="105.9" font-size="8.8">大同區</text>
<text x="61.6" y="117.9" font-size="8.8">三重區</text>
<text x="37.1" y="56" font-size="8.1">區</text>
<text x="204.2" y="69.1" font-size="8.8">大直</text>
<text x="267" y="75.2" font-size="8.1">內湖科技園區</text>
<text x="313" y="64.3" font-size="8.8">內湖</text>
<text x="306.2" y="95.5" font-size="8.8">內湖區</text>
<text x="173" y="110.2" font-size="8.8">中山區</text>
<text x="244.5" y="124.4" font-size="8.1">民生社區</text>
<text x="403.6" y="14.4" font-size="8.1">八連</text>
<text x="437.2" y="17.6" font-size="8.1">秀山</text>
<text x="394.8" y="50.4" font-size="8.1">內溝</text>
<text x="378" y="96.3" font-size="8.8">東湖</text>
<text x="411.6" y="111.5" font-size="8.8">社后</text>
<text x="475.3" y="110.7" font-size="8.8">汐止區</text>
<text x="8.8" y="143.4" font-size="8.1">頭前</text>
<text x="144.8" y="142.6" font-size="8.1">南西商圈</text>
<text x="128" y="157.8" font-size="8.1">台北站前</text>
<text x="93.6" y="174.6" font-size="8.1">艋舺</text>
<text x="21.6" y="194.1" font-size="8.8">江子翠</text>
<text x="88.8" y="197.3" font-size="8.8">萬華區</text>
<text x="134.4" y="195.7" font-size="8.8">中正區</text>
<text x="84" y="214.9" font-size="8.8">加蚋子</text>
<text x="144" y="217" font-size="8.1">古亭</text>
<text x="42.4" y="233" font-size="8.1">埔墘</text>
<text x="108" y="242.7" font-size="8.1">新生地</text>
<text x="171.4" y="139.4" font-size="8.1">朱</text>
<text x="197" y="193.3" font-size="8.8">大安</text>
<text x="231.4" y="201.8" font-size="8.1">三</text>
<text x="175.4" y="211.7" font-size="8.8">大安區</text>
<text x="225" y="219.4" font-size="8.1">六張犁</text>
<text x="317.8" y="229" font-size="8.1">麗山里</text>
<text x="349.2" y="136.5" font-size="8.8">南港區</text>
<text x="382.8" y="149.8" font-size="8.1">橫科</text>
<text x="393.2" y="182.6" font-size="8.1">舊莊</text>
<text x="356.4" y="211.4" font-size="8.1">四分里</text>
<text x="22.4" y="266" font-size="8.1">穗和</text>
<text x="88" y="284.8" font-size="9.2">中和區</text>
<text x="139.2" y="259.1" font-size="8.8">永和區</text>
<text x="142.4" y="272.4" font-size="8.1">秀朗</text>
<text x="115.2" y="304" font-size="9.2">南勢角</text>
<text x="65.6" y="312.9" font-size="8.1">中坑</text>
<text x="181.8" y="260.4" font-size="8.1">公館</text>
<text x="189.8" y="303.9" font-size="8.8">景美</text>
<text x="261" y="310.4" font-size="9.2">文山區</text>
<text x="191.4" y="350.4" font-size="8.1">大坪林</text>
<text x="192.2" y="370.4" font-size="9.2">新店區</text>
<text x="341.2" y="272.4" font-size="8.1">萬順</text>
<text x="371.3" y="276.4" font-size="8.8">深坑區</text>
<text x="407.6" y="302.8" font-size="8.1">昇高坑</text>
<text x="372.9" y="325.2" font-size="8.1">阿柔坑</text>
<text x="475.6" y="304.7" font-size="8.8">石碇區</text>
<text x="469.2" y="348.4" font-size="8.1">烏塗窟</text>
<text x="12.8" y="249.9" font-size="13" fill="#333">北市</text>
<text x="244.5" y="184.7" font-size="11.6" font-weight="bold" fill="#222">臺北市</text>
<text x="460.4" y="216.5" font-size="8.8" fill="#9a78a8" stroke-width="1">臺北市</text>
</g>
<g filter="url(#soft2)" text-anchor="middle" fill="#962033" font-style="italic" font-size="8.2" stroke="#fbe6ea" stroke-width=".9" paint-order="stroke" style="paint-order:stroke" font-family="Liberation Sans, Noto Sans CJK TC, sans-serif">
<text x="70.4" y="80.8">27</text>
<text x="98.4" y="74.7">高架25</text>
<text x="126.4" y="72.8">25B</text>
<text x="7.2" y="106.4">15</text>
<text x="161.7" y="85.9">23</text>
<text x="177.8" y="85.9">3B 23A</text>
<text x="228.2" y="88.8">高架20</text>
<text x="260.2" y="92.8">高架18</text>
<text x="301.8" y="104.8">17</text>
<text x="320.2" y="110">17B</text>
<text x="449.2" y="68.3">10</text>
<text x="478" y="76.8">10</text>
<text x="435.6" y="88.8">10</text>
<text x="440.4" y="100.8">10</text>
<text x="414.8" y="99.2">13</text>
<text x="354.3" y="107.6">15</text>
<text x="432.4" y="121.6">12</text>
<text x="37.6" y="137.8">15</text>
<text x="41.9" y="169.8">17</text>
<text x="4" y="203.4">20</text>
<text x="21.6" y="232.2">20B</text>
<text x="35.2" y="249.8">23</text>
<text x="210.6" y="236.2">0</text>
<text x="420.4" y="135.4">12</text>
<text x="404.4" y="143.4">14</text>
<text x="394" y="167.4">14</text>
<text x="371.9" y="194.3">16</text>
<text x="442.8" y="251">4</text>
<text x="53.6" y="274.8">24</text>
<text x="62.9" y="297.2">26</text>
<text x="41.9" y="312.7">35</text>
<text x="160.1" y="373.2">31</text>
<text x="274.6" y="264.4">3</text>
<text x="296.6" y="270.8">3</text>
<text x="318.6" y="276.4">5A</text>
<text x="317.8" y="296.4">20</text>
<text x="229" y="346.8">26</text>
<text x="456.4" y="268.4">4</text>
</g>
</svg>
<!-- zoom control -->
<div class="abs" style="left:8px;top:7.5px;width:29px;height:56px;border:2px solid rgba(0,0,0,.2);border-radius:4px;background-clip:padding-box"></div>
<div class="abs" style="left:10px;top:9.5px;width:25px;height:52px;background:#fff;border-radius:2.5px"></div>
<div class="abs" style="left:10px;top:35px;width:25px;height:1px;background:#ccc"></div>
<div class="abs" style="left:17.2px;top:21.3px;width:10.6px;height:1.9px;background:#111"></div>
<div class="abs" style="left:21.55px;top:17.1px;width:1.9px;height:10.6px;background:#111"></div>
<div class="abs" style="left:17.4px;top:47.3px;width:10.4px;height:1.9px;background:#111"></div>
<!-- locate control -->
<div class="abs" style="left:8px;top:70.5px;width:29px;height:29px;border:2px solid rgba(0,0,0,.2);border-radius:4px"></div>
<div class="abs" style="left:10px;top:72.5px;width:25px;height:25px;background:#fff;border-radius:2.5px"></div>
<svg class="abs" style="left:14.6px;top:75px" width="17" height="20" viewBox="0 0 17 20"><path d="M8.5 0C3.8 0 0 3.7 0 8.3 0 13.8 8.5 20 8.5 20S17 13.8 17 8.3C17 3.7 13.2 0 8.5 0z" fill="#ea4335"/><circle cx="8.5" cy="8" r="3" fill="#fff"/></svg>
<!-- popup -->
<div class="abs" style="left:174px;top:125px;width:145.5px;height:51.5px;background:#fff;border-radius:12px;box-shadow:0 3px 14px rgba(0,0,0,.4)"></div>
<div class="abs" style="left:240.5px;top:170px;width:12px;height:12px;background:#fff;transform:rotate(45deg);box-shadow:0 3px 14px rgba(0,0,0,.4)"></div>
<div class="abs" style="left:200px;top:160px;width:100px;height:16.5px;background:#fff"></div>
<div class="t" id="pl1" style="left:191.7px;top:137.8px;font-size:10.9px;color:#333;font-family:'Liberation Sans',sans-serif">Latitude: 25.033976,</div>
<div class="t" id="pl2" style="left:191.7px;top:151.8px;font-size:10.9px;color:#333;font-family:'Liberation Sans',sans-serif">Longitude: 121.56453</div>
<!-- marker -->
<svg class="abs" style="left:237.3px;top:190.3px" width="19.6" height="23.6" viewBox="0 0 19.6 23.6"><path d="M9.8 0C4.4 0 0 4.3 0 9.6 0 16 9.8 23.6 9.8 23.6S19.6 16 19.6 9.6C19.6 4.3 15.2 0 9.8 0z" fill="#ea4335"/><circle cx="9.8" cy="9.5" r="3.4" fill="#fff"/></svg>
<!-- attribution -->
<div class="abs" style="left:404px;top:359.5px;width:90px;height:15.5px;background:rgba(255,255,255,.8)"></div>
<div class="t" id="attrc" style="left:407.20000000000005px;top:363px;font-size:10.4px;color:#7a7a7a;font-weight:bold;transform:scaleX(1.1223);transform-origin:0 0;">©</div>
<div class="t" id="attr" style="left:418.20000000000005px;top:363px;font-size:10.4px;color:#0078a8;transform:scaleX(0.9752);transform-origin:0 0;">OpenStreetMap</div>
</div>
<div class="t" id="close" style="left:1246.4px;top:726px;font-size:12.2px;color:#14958a;font-weight:bold;transform:scaleX(0.903);transform-origin:0 0;">Close</div>

</body>
</html>
